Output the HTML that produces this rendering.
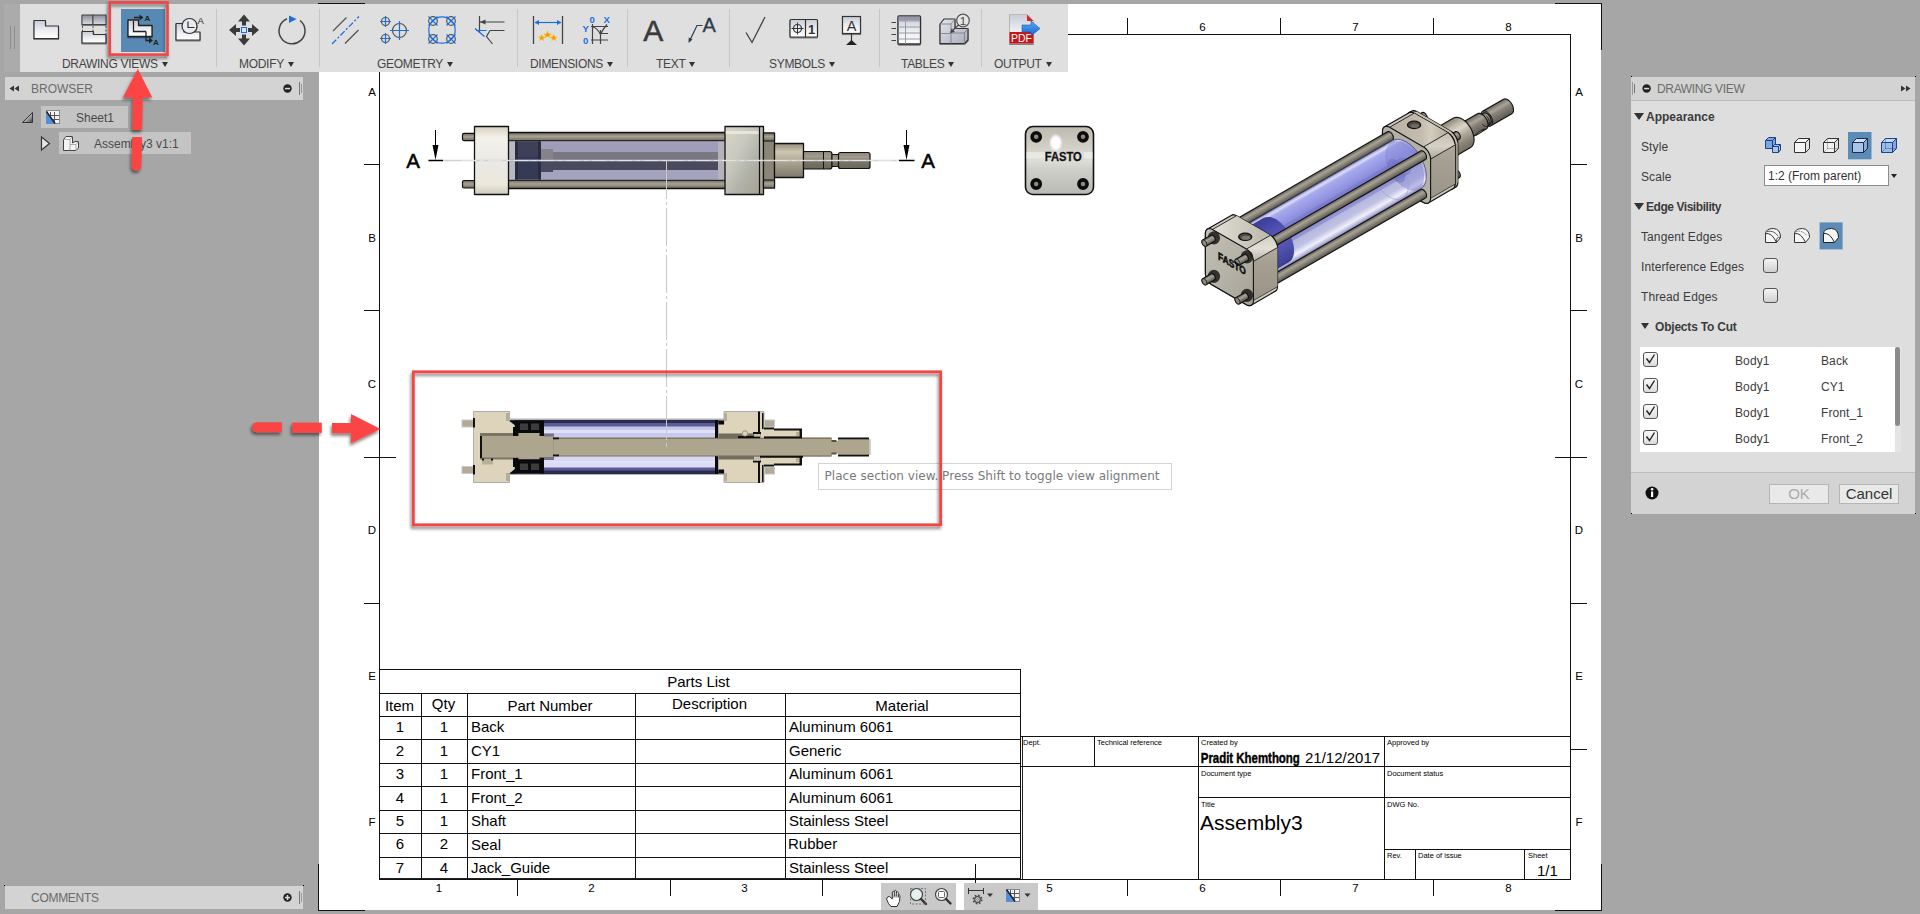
<!DOCTYPE html>
<html lang="en">
<head>
<meta charset="utf-8">
<title>Drawing - Assembly3</title>
<style>
html,body{margin:0;padding:0;}
body{width:1920px;height:914px;overflow:hidden;background:#a6a6a6;font-family:"Liberation Sans",Arial,sans-serif;font-size:12px;color:#444;}
#root{position:relative;width:1920px;height:914px;overflow:hidden;background:#a6a6a6;}
.abs{position:absolute;}
svg{position:absolute;left:0;top:0;overflow:visible;}
svg text{font-family:"Liberation Sans",Arial,sans-serif;}
/* toolbar */
#tb{left:20px;top:4px;width:1048px;height:68px;background:#dfdfdf;}
#tbgrip{left:4px;top:4px;width:16px;height:68px;background:#ababab;}
.tlabel{position:absolute;top:52.5px;letter-spacing:-0.3px;height:14px;line-height:14px;font-size:12px;color:#454545;white-space:nowrap;}
.tlabel i{display:inline-block;width:0;height:0;border-left:3.6px solid transparent;border-right:3.6px solid transparent;border-top:5px solid #333;margin-left:4px;vertical-align:1px;}
.sep{position:absolute;top:5px;width:1px;height:58px;background:#c6c6c6;}
/* panels */
.phead{position:absolute;background:#d3d3d3;height:23px;line-height:24px;font-size:12px;color:#6b6b6b;}
.trow{position:absolute;background:#c4c4c4;height:22px;line-height:24px;font-size:12px;color:#4a4a4a;}
#dv{left:1631px;top:77px;width:284px;height:437px;background:#dedede;}
#dv .lbl{position:absolute;left:10px;letter-spacing:0.1px;font-size:12px;color:#3c3c3c;height:16px;line-height:16px;white-space:nowrap;}
#dv .sec{position:absolute;letter-spacing:0;font-size:12px;font-weight:bold;color:#3c3c3c;height:16px;line-height:16px;white-space:nowrap;}
#dv .tri{position:absolute;width:0;height:0;border-left:5px solid transparent;border-right:5px solid transparent;border-top:7px solid #333;}
.cb{position:absolute;width:13px;height:13px;border:1px solid #555;border-radius:3px;background:linear-gradient(#f4f4f4,#d0d0d0);}
.btn{position:absolute;height:18px;line-height:18px;border:1px solid #b5b5b5;background:#e9e9e9;text-align:center;font-size:15px;color:#333;}
.dot{position:absolute;width:1px;height:1px;background:#000;}
</style>
</head>
<body>
<div id="root">

<!-- SHEET -->
<svg id="sheet" width="1920" height="914" viewBox="0 0 1920 914">
<rect x="319" y="4" width="1282" height="906" fill="#fff"/>
<g id="frame" stroke="#111" stroke-width="1" fill="none" shape-rendering="crispEdges">
<path d="M318 3.5H365 M1555 3.5H1602 M1601.5 3V50 M318.5 864V911 M318 910.5H365 M1555 910.5H1602 M1601.5 864V911"/>
<rect x="379.5" y="34.5" width="1191" height="845"/>
<path d="M1127.5 18V35 M1280.5 18V35 M1433.5 18V35"/>
<path d="M517.5 880V896 M670.5 880V896 M822.5 880V896 M975.5 864V896 M1127.5 880V896 M1280.5 880V896 M1433.5 880V896"/>
<path d="M364 164.5H380 M364 310.5H380 M364 457.5H396 M364 603.5H380"/>
<path d="M1571 164.5H1587 M1571 310.5H1587 M1555 457.5H1587 M1571 603.5H1587 M1571 749.5H1587"/>
</g>
<g id="zones" font-size="11.5" fill="#000" text-anchor="middle">
<text x="1202.5" y="31">6</text><text x="1355.5" y="31">7</text><text x="1508.5" y="31">8</text>
<text x="439" y="892">1</text><text x="591.5" y="892">2</text><text x="744.5" y="892">3</text><text x="1049.5" y="892">5</text><text x="1202.5" y="892">6</text><text x="1355.5" y="892">7</text><text x="1508.5" y="892">8</text>
<text x="372" y="96">A</text><text x="372" y="242">B</text><text x="372" y="388">C</text><text x="372" y="534">D</text><text x="372" y="680">E</text><text x="372" y="826">F</text>
<text x="1579" y="96">A</text><text x="1579" y="242">B</text><text x="1579" y="388">C</text><text x="1579" y="534">D</text><text x="1579" y="680">E</text><text x="1579" y="826">F</text>
</g>
<!-- PARTS LIST -->
<g id="parts" stroke="#111" stroke-width="1" fill="none" shape-rendering="crispEdges">
<path d="M380 669.5H1021 M380 693.5H1021 M380 716.5H1021 M380 739.5H1021 M380 763.5H1021 M380 786.5H1021 M380 810.5H1021 M380 833.5H1021 M380 857.5H1021 M421.5 694V880 M467.5 694V880 M635.5 694V880 M785.5 694V880 M1020.5 669V880"/>
<path d="M1022.5 736V880 M380 878.5H1021" stroke="#222"/>
</g>
<g id="partstxt" font-size="15" fill="#000">
<text x="698.5" y="687" text-anchor="middle">Parts List</text>
<text x="399.5" y="711" text-anchor="middle">Item</text><text x="443.5" y="709" text-anchor="middle">Qty</text><text x="550" y="711" text-anchor="middle">Part Number</text><text x="709.5" y="709" text-anchor="middle">Description</text><text x="902" y="711" text-anchor="middle">Material</text>
<text x="400" y="732" text-anchor="middle">1</text><text x="444" y="732" text-anchor="middle">1</text><text x="471" y="732">Back</text><text x="789" y="732">Aluminum 6061</text>
<text x="400" y="756" text-anchor="middle">2</text><text x="444" y="756" text-anchor="middle">1</text><text x="471" y="756">CY1</text><text x="789" y="756">Generic</text>
<text x="400" y="779" text-anchor="middle">3</text><text x="444" y="779" text-anchor="middle">1</text><text x="471" y="779">Front_1</text><text x="789" y="779">Aluminum 6061</text>
<text x="400" y="803" text-anchor="middle">4</text><text x="444" y="803" text-anchor="middle">1</text><text x="471" y="803">Front_2</text><text x="789" y="803">Aluminum 6061</text>
<text x="400" y="826" text-anchor="middle">5</text><text x="444" y="826" text-anchor="middle">1</text><text x="471" y="826">Shaft</text><text x="789" y="826">Stainless Steel</text>
<text x="400" y="849" text-anchor="middle">6</text><text x="444" y="849" text-anchor="middle">2</text><text x="471" y="850">Seal</text><text x="788" y="849">Rubber</text>
<text x="400" y="873" text-anchor="middle">7</text><text x="444" y="873" text-anchor="middle">4</text><text x="471" y="873">Jack_Guide</text><text x="789" y="873">Stainless Steel</text>
</g>
<!-- TITLE BLOCK -->
<g id="tblock" stroke="#111" stroke-width="1" fill="none" shape-rendering="crispEdges">
<path d="M1021 736.5H1571 M1021 766.5H1571 M1198 797.5H1571 M1384 849.5H1571 M1094.5 736V766 M1198.5 736V880 M1384.5 736V880 M1415.5 849V880 M1524.5 849V880"/>
</g>
<g id="tbtxt" font-size="7.5" fill="#000">
<text x="1023" y="745">Dept.</text><text x="1097" y="745">Technical reference</text><text x="1201" y="745">Created by</text><text x="1387" y="745">Approved by</text>
<text x="1201" y="776">Document type</text><text x="1387" y="776">Document status</text>
<text x="1201" y="807">Title</text><text x="1387" y="807">DWG No.</text>
<text x="1387" y="858">Rev.</text><text x="1418" y="858">Date of issue</text><text x="1528" y="858">Sheet</text>
<text x="1200.800" y="763.300" font-size="15.500" font-weight="bold" stroke="#000" stroke-width="0.450" textLength="99" lengthAdjust="spacingAndGlyphs">Pradit Khemthong</text>
<text x="1305" y="763" font-size="15">21/12/2017</text>
<text x="1200" y="830" font-size="21">Assembly3</text>
<text x="1537" y="876" font-size="15">1/1</text>
</g>
</svg>
<!-- DRAWINGS -->
<svg id="views" width="1920" height="914" viewBox="0 0 1920 914">
<defs>
<filter id="rsh" x="-10%" y="-10%" width="125%" height="130%"><feDropShadow dx="-1.2" dy="2.600" stdDeviation="1.800" flood-color="#000" flood-opacity="0.5"/></filter>
<linearGradient id="gRod" x1="0" y1="0" x2="0" y2="1"><stop offset="0" stop-color="#6a665b"/><stop offset="0.45" stop-color="#a9a394"/><stop offset="1" stop-color="#6f6a5e"/></linearGradient>
<linearGradient id="gShaft" x1="0" y1="0" x2="0" y2="1"><stop offset="0" stop-color="#8b8678"/><stop offset="0.3" stop-color="#a39d8e"/><stop offset="0.55" stop-color="#7a7569"/><stop offset="1" stop-color="#6b675b"/></linearGradient>
<linearGradient id="gCapL" x1="0" y1="0" x2="0" y2="1"><stop offset="0" stop-color="#d6d0bd"/><stop offset="0.16" stop-color="#f3f1ea"/><stop offset="0.6" stop-color="#e9e8e3"/><stop offset="0.85" stop-color="#ebe9dc"/><stop offset="1" stop-color="#cfcbb9"/></linearGradient>
<linearGradient id="gCapR" x1="0" y1="0" x2="1" y2="1"><stop offset="0" stop-color="#d9d5c4"/><stop offset="0.35" stop-color="#c9c9c0"/><stop offset="0.6" stop-color="#b3b4ab"/><stop offset="1" stop-color="#a29f90"/></linearGradient>
<linearGradient id="gBush" x1="0" y1="0" x2="0" y2="1"><stop offset="0" stop-color="#948e7e"/><stop offset="0.25" stop-color="#cdc6b2"/><stop offset="0.6" stop-color="#a69f8d"/><stop offset="1" stop-color="#7d786b"/></linearGradient>
<linearGradient id="gPlate" x1="0" y1="0" x2="0" y2="1"><stop offset="0" stop-color="#bdbab0"/><stop offset="0.3" stop-color="#d1cfc6"/><stop offset="0.5" stop-color="#deded8"/><stop offset="0.62" stop-color="#cfd0ca"/><stop offset="1" stop-color="#b9b9b2"/></linearGradient>
<linearGradient id="gLav" x1="0" y1="0" x2="0" y2="1"><stop offset="0" stop-color="#c4c4ea"/><stop offset="1" stop-color="#dcdcf6"/></linearGradient>
</defs>

<!-- ===== TOP (SIDE) VIEW ===== -->
<g id="sideview" stroke-linejoin="round">
<!-- tie rods -->
<rect x="508" y="132.500" width="218" height="8.500" fill="url(#gRod)" stroke="#111" stroke-width="1.300"/>
<rect x="508" y="180" width="218" height="8.500" fill="url(#gRod)" stroke="#111" stroke-width="1.300"/>
<!-- tube -->
<rect x="508.500" y="141.500" width="216.500" height="38" fill="#9a9ab6"/>
<rect x="508.500" y="141.500" width="7" height="38" fill="#b9b9c1"/>
<rect x="717.500" y="141.500" width="8" height="38" fill="#b4b3ba"/>
<rect x="541" y="141.500" width="177" height="10.500" fill="#9e9eba"/>
<rect x="541" y="169.500" width="177" height="10" fill="#a3a3be"/>
<rect x="541" y="149" width="12" height="23" fill="#85828c"/>
<rect x="553" y="152" width="165" height="9" fill="#7a7781"/>
<rect x="541" y="160.500" width="177" height="9.500" fill="#4a495e"/>
<rect x="541" y="160.500" width="12" height="11.500" fill="#4a495e"/>
<rect x="515" y="141.500" width="26" height="38" fill="#373a55"/>
<rect x="515" y="141.500" width="26" height="15" fill="#3e405a"/>
<rect x="515" y="141.500" width="3" height="38" fill="#2a2c40"/>
<rect x="538" y="141.500" width="3" height="38" fill="#2a2c40"/>
<rect x="508.500" y="159.500" width="209" height="2" fill="#6f74a8" opacity="0.55"/>
<!-- left nuts -->
<rect x="462.500" y="133.400" width="13" height="7.200" rx="1.500" fill="url(#gRod)" stroke="#111" stroke-width="1.200"/>
<rect x="462.500" y="180.500" width="13" height="7.500" rx="1.500" fill="url(#gRod)" stroke="#111" stroke-width="1.200"/>
<!-- left cap -->
<rect x="474.500" y="126.500" width="34" height="68" fill="url(#gCapL)" stroke="#111" stroke-width="1.300"/>
<!-- right cap -->
<rect x="725" y="126.500" width="38.500" height="68" fill="url(#gCapR)" stroke="#111" stroke-width="1.300"/>
<rect x="725.700" y="131" width="33" height="3" fill="#efece0" opacity="0.8"/>
<path d="M759.500 126.500V194.500" stroke="#111" stroke-width="1.200"/>
<!-- right nuts + hub -->
<rect x="763.500" y="133" width="11" height="55" fill="#8a8576" stroke="#111" stroke-width="1.200"/>
<rect x="763.500" y="133" width="11" height="8" fill="url(#gRod)" stroke="#111" stroke-width="1.200"/>
<rect x="763.500" y="180" width="11" height="8" fill="url(#gRod)" stroke="#111" stroke-width="1.200"/>
<!-- bushing -->
<rect x="774.500" y="143.500" width="29" height="34" fill="url(#gBush)" stroke="#111" stroke-width="1.300"/>
<!-- rod -->
<path d="M803.500 151.500H829.500Q832 151.500 832 154V166.500Q832 169 829.500 169H803.500Z" fill="url(#gShaft)" stroke="#111" stroke-width="1.200"/>
<path d="M823.500 151.500V169" stroke="#111" stroke-width="1"/>
<rect x="832" y="154.500" width="6.500" height="12" fill="url(#gShaft)" stroke="#111" stroke-width="1"/>
<rect x="838.500" y="152.500" width="31.500" height="16" rx="2" fill="url(#gShaft)" stroke="#111" stroke-width="1.200"/>
<!-- section line -->
<path d="M443 160.500H899" stroke="#d2d2d2" stroke-width="1.500"/>
<path d="M462 160.500H912" stroke="#f2f2f2" stroke-width="1.200" stroke-dasharray="14 4 4 4" opacity="0.55"/>
<path d="M428.500 160.500H443 M899 160.500H914.500" stroke="#000" stroke-width="1.600"/>
<path d="M435.500 130V150 M906.500 130V150" stroke="#000" stroke-width="1"/>
<path d="M432.500 145H438.500L435.500 160Z M903.500 145H909.500L906.500 160Z" fill="#000"/>
<text x="406.300" y="168" font-size="20.500" fill="#000" stroke="#000" stroke-width="0.500">A</text>
<text x="921.300" y="168" font-size="20.500" fill="#000" stroke="#000" stroke-width="0.500">A</text>
</g>

<!-- ===== END VIEW ===== -->
<g id="endview">
<rect x="1025.500" y="126.500" width="68" height="68" rx="7.500" fill="url(#gPlate)" stroke="#111" stroke-width="1.600"/>
<rect x="1026.500" y="152" width="66" height="6.500" fill="#eeeeea" opacity="0.75"/>
<rect x="1046" y="150.500" width="38" height="10" fill="#d9d9d3" opacity="0.8"/>
<ellipse cx="1055.800" cy="142.700" rx="4.800" ry="6.500" fill="#fff"/>
<ellipse cx="1055.800" cy="142.700" rx="6.500" ry="8.500" fill="#fff" opacity="0.45"/>
<g fill="#8a8880" stroke="#0c0c0c" stroke-width="3.600"><circle cx="1036.200" cy="136.800" r="4.100"/><circle cx="1083" cy="136.800" r="4.100"/><circle cx="1036.200" cy="184" r="4.100"/><circle cx="1083" cy="184" r="4.100"/></g>
<text x="1063.300" y="160.500" font-size="13.500" font-weight="bold" fill="#111" stroke="#111" stroke-width="0.300" text-anchor="middle" textLength="37" lengthAdjust="spacingAndGlyphs">FASTO</text>
</g>

<!-- ===== SECTION VIEW ===== -->
<g id="secview">
<!-- outer gray lines of tube -->
<rect x="509" y="418.500" width="215" height="56.500" fill="#b3b3b3"/>
<!-- tube interior -->
<rect x="509" y="420" width="209" height="54" fill="#2b2b4b"/>
<rect x="544" y="423" width="172" height="47.500" fill="#5b5b97"/>
<rect x="544" y="426.500" width="172" height="41" fill="url(#gLav)"/>
<rect x="544" y="430" width="172" height="3" fill="#e0e0f8"/>
<rect x="544" y="461" width="172" height="2.500" fill="#e0e0f8"/>
<!-- left nuts -->
<rect x="462" y="420" width="12" height="7" fill="#b3a994" stroke="#c9c9c9" stroke-width="1"/>
<rect x="462" y="466.500" width="12" height="7" fill="#b3a994" stroke="#c9c9c9" stroke-width="1"/>
<!-- left cap -->
<path d="M473.500 411.500H509.500V421L514.500 424.500V470L509.500 473.500V482.500H473.500Z" fill="#ddd4bb" stroke="#adadad" stroke-width="1"/>
<path d="M506 413H509V421H506Z M506 473H509V481H506Z" fill="#b5ad96"/>
<rect x="473" y="418" width="2" height="9.500" fill="#111"/><rect x="473" y="465" width="2" height="9.500" fill="#111"/>
<rect x="480" y="433" width="38" height="26.500" fill="#7b7563"/>
<!-- seals -->
<g fill="#0a0a0a"><rect x="515" y="420.500" width="29" height="12.500"/><rect x="513" y="427" width="5.500" height="9"/><rect x="539.500" y="421" width="4.500" height="15"/><path d="M509.500 421L516 421V426Z"/>
<rect x="515" y="460" width="29" height="13"/><rect x="513" y="458" width="5.500" height="9"/><rect x="539.500" y="458" width="4.500" height="15.500"/><path d="M509.500 473.500L516 473.500V468Z"/></g>
<g fill="#3c3c3c"><rect x="520" y="423.500" width="8" height="6.500"/><rect x="531" y="423.500" width="8" height="6.500"/><rect x="520" y="463.500" width="8" height="6.500"/><rect x="531" y="463.500" width="8" height="6.500"/></g>
<!-- rod -->
<rect x="480.500" y="436" width="73.500" height="21.500" fill="#aea58f"/>
<rect x="518.500" y="433" width="21" height="26" fill="#aea58f"/>
<rect x="544" y="433.500" width="10" height="3" fill="#76738a"/><rect x="544" y="457" width="10" height="3" fill="#76738a"/>
<rect x="553.500" y="437.500" width="278" height="19" fill="#7d7663"/>
<rect x="553.500" y="439" width="278" height="16.500" fill="#aea58f"/>
<rect x="553" y="437.500" width="6" height="1.800" fill="#111"/><rect x="553" y="454.500" width="6" height="1.800" fill="#111"/>
<rect x="480" y="436" width="2" height="22" fill="#111"/>
<rect x="482" y="459.500" width="11" height="5" fill="#b9af99"/><rect x="482" y="458.500" width="2" height="2" fill="#111"/><rect x="491" y="458.500" width="2" height="2" fill="#111"/>
<!-- tube right end -->
<rect x="715" y="420" width="3.500" height="18" fill="#0a0a0a"/><rect x="715" y="456" width="3.500" height="18" fill="#0a0a0a"/>
<!-- right cap -->
<path d="M718.500 424H724V411.500H764V482.500H724V470H718.500Z" fill="#ddd4bb" stroke="#adadad" stroke-width="1"/>
<path d="M724 413H727V421H724Z M724 473H727V481H724Z" fill="#b5ad96"/>
<rect x="718.500" y="420.500" width="5.500" height="4" fill="#0a0a0a"/><rect x="718.500" y="469.500" width="5.500" height="4" fill="#0a0a0a"/>
<rect x="718.500" y="433.500" width="42" height="5" fill="#716c5b"/><rect x="718.500" y="456" width="42" height="3.500" fill="#716c5b"/>
<rect x="738" y="436" width="22" height="2" fill="#111"/>
<circle cx="745" cy="433.500" r="2.700" fill="#ddd4bb" stroke="#9a927e" stroke-width="1"/>
<rect x="753" y="432" width="8" height="2" fill="#111"/><rect x="753" y="460.500" width="8" height="2" fill="#111"/>
<rect x="754" y="434" width="6" height="4" fill="#c4c1b8"/><rect x="754" y="456.500" width="6" height="4" fill="#c4c1b8"/>
<rect x="758" y="411.500" width="2" height="22" fill="#111"/><rect x="758" y="462" width="2" height="21" fill="#111"/>
<rect x="762" y="413" width="1.500" height="16" fill="#111"/><rect x="762" y="465" width="1.500" height="17" fill="#111"/>
<!-- right nuts -->
<rect x="764.500" y="420" width="10" height="7" fill="#b3a994" stroke="#c9c9c9" stroke-width="1"/>
<rect x="764.500" y="467" width="10" height="7" fill="#b3a994" stroke="#c9c9c9" stroke-width="1"/>
<!-- bushing -->
<rect x="762" y="430" width="40" height="7.500" fill="#ddd4bb"/><rect x="762" y="456.500" width="40" height="7.500" fill="#ddd4bb"/>
<rect x="764" y="427.500" width="10" height="2" fill="#111"/><rect x="774" y="428.500" width="28" height="2" fill="#111"/><rect x="764" y="436.500" width="38" height="1.800" fill="#111"/>
<rect x="764" y="464.500" width="10" height="2" fill="#111"/><rect x="774" y="463.500" width="28" height="2" fill="#111"/><rect x="760" y="455.800" width="43" height="1.800" fill="#111"/>
<rect x="799.500" y="430" width="2.500" height="7" fill="#111"/><rect x="799.500" y="457" width="2.500" height="7" fill="#111"/>
<rect x="796" y="432" width="3" height="4" fill="#b5ad96"/><rect x="796" y="458" width="3" height="4" fill="#b5ad96"/>
<rect x="716" y="437.800" width="115.500" height="18.600" fill="#7d7663"/><rect x="716" y="439" width="115.500" height="16.400" fill="#aea58f"/>
<rect x="764" y="436.800" width="38" height="1.600" fill="#111"/><rect x="760" y="455.800" width="43" height="1.600" fill="#111"/><rect x="738" y="436.600" width="22" height="1.600" fill="#111"/>
<!-- rod end -->
<rect x="831" y="441" width="7.500" height="12.500" fill="#aea58f"/><rect x="831.500" y="440" width="5" height="2" fill="#55503f"/><rect x="831.500" y="452.500" width="5" height="2" fill="#55503f"/>
<rect x="838" y="437.500" width="31" height="19" fill="#111"/><rect x="838" y="439.300" width="31" height="15.400" fill="#aea58f"/>
<rect x="869" y="439" width="1.800" height="16" fill="#c7c7c7"/>
</g>
<path d="M666.500 161V447" stroke="#c9c9c9" stroke-width="1" stroke-dasharray="38 3 3 3" shape-rendering="crispEdges"/>
<!-- ISOSTART --><defs><linearGradient id="iEnd" x1="0" y1="0" x2="1" y2="1"><stop offset="0" stop-color="#c2bfb6"/><stop offset="0.5" stop-color="#b5b2a8"/><stop offset="1" stop-color="#a5a196"/></linearGradient>
<linearGradient id="iTopB" x1="0" y1="0" x2="1" y2="0"><stop offset="0" stop-color="#e3e1d8"/><stop offset="0.4" stop-color="#d2cfc5"/><stop offset="1" stop-color="#bdb7aa"/></linearGradient>
<linearGradient id="iSideB" x1="0" y1="0" x2="0" y2="1"><stop offset="0" stop-color="#b3ad9f"/><stop offset="0.3" stop-color="#a59f92"/><stop offset="1" stop-color="#9a9488"/></linearGradient>
<linearGradient id="iFilB" x1="0" y1="0" x2="0" y2="1"><stop offset="0" stop-color="#d1cdc1"/><stop offset="0.5" stop-color="#e2dfd5"/><stop offset="1" stop-color="#b9b4a7"/></linearGradient>
<linearGradient id="iTopF" x1="0" y1="0" x2="1" y2="0"><stop offset="0" stop-color="#b9b2a4"/><stop offset="0.55" stop-color="#c4bdaf"/><stop offset="0.7" stop-color="#d3cdc0"/><stop offset="1" stop-color="#b3ac9d"/></linearGradient>
<linearGradient id="iSideF" x1="0" y1="0" x2="0" y2="1"><stop offset="0" stop-color="#b0aa9c"/><stop offset="0.3" stop-color="#a59f92"/><stop offset="1" stop-color="#9c968a"/></linearGradient>
<linearGradient id="iFilF" x1="0" y1="0" x2="0" y2="1"><stop offset="0" stop-color="#c4beb0"/><stop offset="0.5" stop-color="#d6d2c6"/><stop offset="1" stop-color="#aea899"/></linearGradient><linearGradient id="iR1" gradientUnits="userSpaceOnUse" x1="1493.9" y1="104.8" x2="1502.2" y2="119.2"><stop offset="0" stop-color="#6b675e"/><stop offset="0.3" stop-color="#aaa598"/><stop offset="0.5" stop-color="#87837a"/><stop offset="1" stop-color="#5f5b53"/></linearGradient>
<linearGradient id="iR2" gradientUnits="userSpaceOnUse" x1="1480.8" y1="114.7" x2="1487.1" y2="125.6"><stop offset="0" stop-color="#6b675e"/><stop offset="0.3" stop-color="#aaa598"/><stop offset="0.5" stop-color="#87837a"/><stop offset="1" stop-color="#5f5b53"/></linearGradient>
<linearGradient id="iR3" gradientUnits="userSpaceOnUse" x1="1465.4" y1="120.7" x2="1474.2" y2="135.9"><stop offset="0" stop-color="#6b675e"/><stop offset="0.3" stop-color="#aaa598"/><stop offset="0.5" stop-color="#87837a"/><stop offset="1" stop-color="#5f5b53"/></linearGradient>
<linearGradient id="iB1" gradientUnits="userSpaceOnUse" x1="1443.6" y1="123.8" x2="1460.6" y2="153.2"><stop offset="0" stop-color="#8a8578"/><stop offset="0.22" stop-color="#c3bdad"/><stop offset="0.36" stop-color="#dad5c6"/><stop offset="0.55" stop-color="#b1ab9b"/><stop offset="0.8" stop-color="#878275"/><stop offset="1" stop-color="#716d62"/></linearGradient>
<linearGradient id="iN0" gradientUnits="userSpaceOnUse" x1="1418.6" y1="114.6" x2="1422.8" y2="121.9"><stop offset="0" stop-color="#5e5b52"/><stop offset="0.35" stop-color="#a8a396"/><stop offset="0.6" stop-color="#8b877b"/><stop offset="1" stop-color="#55524a"/></linearGradient>
<linearGradient id="iN1" gradientUnits="userSpaceOnUse" x1="1451.7" y1="172.3" x2="1455.9" y2="179.5"><stop offset="0" stop-color="#5e5b52"/><stop offset="0.35" stop-color="#a8a396"/><stop offset="0.6" stop-color="#8b877b"/><stop offset="1" stop-color="#55524a"/></linearGradient>
<linearGradient id="iN2" gradientUnits="userSpaceOnUse" x1="1451.7" y1="133.7" x2="1455.9" y2="141.0"><stop offset="0" stop-color="#5e5b52"/><stop offset="0.35" stop-color="#a8a396"/><stop offset="0.6" stop-color="#8b877b"/><stop offset="1" stop-color="#55524a"/></linearGradient>
<linearGradient id="iB2" gradientUnits="userSpaceOnUse" x1="1428.2" y1="129.8" x2="1447.7" y2="163.6"><stop offset="0" stop-color="#8a8578"/><stop offset="0.22" stop-color="#c3bdad"/><stop offset="0.36" stop-color="#dad5c6"/><stop offset="0.55" stop-color="#b1ab9b"/><stop offset="0.8" stop-color="#878275"/><stop offset="1" stop-color="#716d62"/></linearGradient>
<linearGradient id="iT0" gradientUnits="userSpaceOnUse" x1="1309.4" y1="176.9" x2="1314.3" y2="185.4"><stop offset="0" stop-color="#5e5b52"/><stop offset="0.35" stop-color="#a8a396"/><stop offset="0.6" stop-color="#8b877b"/><stop offset="1" stop-color="#55524a"/></linearGradient>
<linearGradient id="iTube" gradientUnits="userSpaceOnUse" x1="1314.4" y1="185.7" x2="1342.4" y2="234.2"><stop offset="0" stop-color="#9698de"/><stop offset="0.05" stop-color="#dcdcf8"/><stop offset="0.1" stop-color="#a8aaec"/><stop offset="0.25" stop-color="#9698e4"/><stop offset="0.42" stop-color="#8082d2"/><stop offset="0.5" stop-color="#7e80cc"/><stop offset="0.56" stop-color="#8486c2"/><stop offset="0.63" stop-color="#b2b4dc"/><stop offset="0.8" stop-color="#c0c2e4"/><stop offset="0.9" stop-color="#f0f0fa"/><stop offset="0.95" stop-color="#c2c4e2"/><stop offset="1" stop-color="#8c8ec2"/></linearGradient>
<linearGradient id="iPist" gradientUnits="userSpaceOnUse" x1="1254.1" y1="223.4" x2="1279.6" y2="267.5"><stop offset="0" stop-color="#33348e"/><stop offset="0.3" stop-color="#4a4bb0"/><stop offset="0.5" stop-color="#5a5bbe"/><stop offset="0.75" stop-color="#4647a8"/><stop offset="1" stop-color="#303188"/></linearGradient>
<linearGradient id="iT1" gradientUnits="userSpaceOnUse" x1="1342.5" y1="234.5" x2="1347.4" y2="243.0"><stop offset="0" stop-color="#5e5b52"/><stop offset="0.35" stop-color="#a8a396"/><stop offset="0.6" stop-color="#8b877b"/><stop offset="1" stop-color="#55524a"/></linearGradient>
<linearGradient id="iT2" gradientUnits="userSpaceOnUse" x1="1342.5" y1="196.0" x2="1347.4" y2="204.5"><stop offset="0" stop-color="#5e5b52"/><stop offset="0.35" stop-color="#a8a396"/><stop offset="0.6" stop-color="#8b877b"/><stop offset="1" stop-color="#55524a"/></linearGradient>
<linearGradient id="iBN0" gradientUnits="userSpaceOnUse" x1="1206.9" y1="237.7" x2="1210.4" y2="243.8"><stop offset="0" stop-color="#5e5b52"/><stop offset="0.35" stop-color="#a8a396"/><stop offset="0.6" stop-color="#8b877b"/><stop offset="1" stop-color="#55524a"/></linearGradient>
<linearGradient id="iBN1" gradientUnits="userSpaceOnUse" x1="1206.9" y1="276.2" x2="1210.4" y2="282.3"><stop offset="0" stop-color="#5e5b52"/><stop offset="0.35" stop-color="#a8a396"/><stop offset="0.6" stop-color="#8b877b"/><stop offset="1" stop-color="#55524a"/></linearGradient>
<linearGradient id="iBN2" gradientUnits="userSpaceOnUse" x1="1240.0" y1="256.8" x2="1243.5" y2="262.9"><stop offset="0" stop-color="#5e5b52"/><stop offset="0.35" stop-color="#a8a396"/><stop offset="0.6" stop-color="#8b877b"/><stop offset="1" stop-color="#55524a"/></linearGradient>
<linearGradient id="iBN3" gradientUnits="userSpaceOnUse" x1="1240.0" y1="295.3" x2="1243.5" y2="301.4"><stop offset="0" stop-color="#5e5b52"/><stop offset="0.35" stop-color="#a8a396"/><stop offset="0.6" stop-color="#8b877b"/><stop offset="1" stop-color="#55524a"/></linearGradient></defs>
<g id="isoview">
<path d="M1482.6 111.3 L1503.5 99.3 L1504.2 99.0 L1505.0 98.9 L1505.8 99.0 L1506.7 99.2 L1507.6 99.7 L1508.6 100.3 L1509.5 101.1 L1510.3 102.0 L1511.1 103.0 L1511.8 104.1 L1512.4 105.2 L1512.9 106.4 L1513.2 107.6 L1513.4 108.8 L1513.5 109.9 L1513.4 110.9 L1513.2 111.8 L1512.9 112.6 L1512.4 113.2 L1511.8 113.7 L1490.9 125.7 L1490.2 126.0 L1489.4 126.1 L1488.6 126.0 L1487.7 125.7 L1486.8 125.3 L1485.9 124.7 L1485.0 123.9 L1484.1 123.0 L1483.3 122.0 L1482.6 120.9 L1482.0 119.8 L1481.6 118.6 L1481.2 117.4 L1481.0 116.2 L1480.9 115.1 L1481.0 114.1 L1481.2 113.2 L1481.6 112.4 L1482.0 111.8Z" fill="url(#iR1)" stroke="#111" stroke-width="1.1" stroke-linejoin="round" />
<path d="M1492.7 121.9 L1492.6 120.8 L1492.4 119.6 L1492.0 118.5 L1491.5 117.3 L1490.9 116.1 L1490.2 115.0 L1489.4 114.0 L1488.6 113.1 L1487.7 112.4 L1486.8 111.7 L1485.9 111.3 L1485.0 111.0 L1484.1 110.9 L1483.3 111.0 L1482.6 111.3 L1482.0 111.8 L1481.6 112.4 L1481.2 113.2 L1481.0 114.1 L1480.9 115.1 L1481.0 116.2 L1481.2 117.4 L1481.6 118.6 L1482.0 119.8 L1482.6 120.9 L1483.3 122.0 L1484.1 123.0 L1485.0 123.9 L1485.9 124.7 L1486.8 125.3 L1487.7 125.7 L1488.6 126.0 L1489.4 126.1 L1490.2 126.0 L1490.9 125.7 L1491.5 125.2 L1492.0 124.6 L1492.4 123.8 L1492.6 122.9Z" fill="url(#iR1)" stroke="#111" stroke-width="0.9900000000000001" stroke-linejoin="round" />
<path d="M1489.9 124.0 L1485.0 126.8 L1484.5 127.0 L1483.9 127.1 L1483.2 127.1 L1482.5 126.9 L1481.8 126.5 L1481.1 126.1 L1480.5 125.5 L1479.8 124.8 L1479.2 124.0 L1478.7 123.2 L1478.2 122.3 L1477.9 121.4 L1477.6 120.5 L1477.4 119.6 L1477.4 118.8 L1477.4 118.0 L1477.6 117.3 L1477.9 116.7 L1478.2 116.3 L1478.7 115.9 L1483.6 113.1 L1484.2 112.8 L1484.8 112.8 L1485.4 112.8 L1486.1 113.0 L1486.8 113.4 L1487.5 113.8 L1488.2 114.4 L1488.8 115.1 L1489.4 115.9 L1489.9 116.7 L1490.4 117.6 L1490.8 118.5 L1491.0 119.4 L1491.2 120.3 L1491.2 121.1 L1491.2 121.9 L1491.0 122.6 L1490.8 123.1 L1490.4 123.6Z" fill="url(#iR2)" stroke="#111" stroke-width="1.1" stroke-linejoin="round" />
<path d="M1486.3 123.9 L1486.2 123.1 L1486.1 122.2 L1485.8 121.3 L1485.4 120.4 L1485.0 119.6 L1484.5 118.7 L1483.9 118.0 L1483.2 117.3 L1482.5 116.7 L1481.8 116.2 L1481.1 115.9 L1480.5 115.7 L1479.8 115.6 L1479.2 115.7 L1478.7 115.9 L1478.2 116.3 L1477.9 116.7 L1477.6 117.3 L1477.4 118.0 L1477.4 118.8 L1477.4 119.6 L1477.6 120.5 L1477.9 121.4 L1478.2 122.3 L1478.7 123.2 L1479.2 124.0 L1479.8 124.8 L1480.5 125.5 L1481.1 126.1 L1481.8 126.5 L1482.5 126.9 L1483.2 127.1 L1483.9 127.1 L1484.5 127.0 L1485.0 126.8 L1485.4 126.5 L1485.8 126.0 L1486.1 125.4 L1486.2 124.7Z" fill="url(#iR2)" stroke="#111" stroke-width="0.9900000000000001" stroke-linejoin="round" />
<path d="M1457.6 125.2 L1477.4 113.8 L1478.2 113.4 L1479.0 113.3 L1479.9 113.4 L1480.9 113.7 L1481.8 114.2 L1482.8 114.8 L1483.8 115.6 L1484.7 116.6 L1485.5 117.7 L1486.2 118.8 L1486.9 120.1 L1487.4 121.3 L1487.8 122.6 L1488.0 123.8 L1488.1 125.0 L1488.0 126.0 L1487.8 127.0 L1487.4 127.8 L1486.9 128.5 L1486.2 129.0 L1466.4 140.4 L1465.7 140.7 L1464.9 140.8 L1464.0 140.7 L1463.0 140.5 L1462.0 140.0 L1461.1 139.3 L1460.1 138.5 L1459.2 137.6 L1458.4 136.5 L1457.6 135.3 L1457.0 134.1 L1456.5 132.9 L1456.1 131.6 L1455.9 130.4 L1455.8 129.2 L1455.9 128.1 L1456.1 127.2 L1456.5 126.3 L1457.0 125.7Z" fill="url(#iR3)" stroke="#111" stroke-width="1.1" stroke-linejoin="round" />
<path d="M1468.3 136.4 L1468.2 135.2 L1468.0 134.0 L1467.6 132.7 L1467.1 131.5 L1466.4 130.3 L1465.7 129.1 L1464.9 128.0 L1464.0 127.1 L1463.0 126.3 L1462.0 125.6 L1461.1 125.1 L1460.1 124.9 L1459.2 124.8 L1458.4 124.9 L1457.6 125.2 L1457.0 125.7 L1456.5 126.3 L1456.1 127.2 L1455.9 128.1 L1455.8 129.2 L1455.9 130.4 L1456.1 131.6 L1456.5 132.9 L1457.0 134.1 L1457.6 135.3 L1458.4 136.5 L1459.2 137.6 L1460.1 138.5 L1461.1 139.3 L1462.0 140.0 L1463.0 140.5 L1464.0 140.7 L1464.9 140.8 L1465.7 140.7 L1466.4 140.4 L1467.1 139.9 L1467.6 139.3 L1468.0 138.4 L1468.2 137.5Z" fill="url(#iR3)" stroke="#111" stroke-width="0.9900000000000001" stroke-linejoin="round" />
<path d="M1482.2 124.1 L1483.0 124.9 L1483.8 125.5 L1484.7 126.0 L1485.5 126.4 L1486.4 126.5 L1487.1 126.5 L1487.8 126.2 L1488.4 125.8 L1488.8 125.3 L1489.1 124.6 L1489.3 123.7 L1489.4 122.8 L1489.3 121.7 L1489.1 120.6 L1488.7 119.5 L1488.2 118.4 L1487.6 117.4 L1486.9 116.4 L1486.2 115.5" fill="none" stroke="#111" stroke-width="0.8" stroke-linejoin="round" />
<path d="M1478.2 132.3 L1483.8 129.0 L1481.8 132.0 L1476.2 135.3Z" fill="#8a8578" stroke="#111" stroke-width="0.8" stroke-linejoin="round" />
<path d="M1433.0 129.9 L1453.5 118.1 L1455.0 117.5 L1456.6 117.3 L1458.3 117.5 L1460.2 118.0 L1462.0 118.9 L1463.9 120.2 L1465.8 121.7 L1467.5 123.6 L1469.1 125.7 L1470.5 127.9 L1471.8 130.3 L1472.7 132.7 L1473.5 135.1 L1473.9 137.5 L1474.1 139.7 L1473.9 141.8 L1473.5 143.7 L1472.7 145.3 L1471.8 146.6 L1470.5 147.5 L1450.0 159.4 L1448.6 159.9 L1447.0 160.2 L1445.2 160.0 L1443.4 159.4 L1441.5 158.5 L1439.6 157.3 L1437.8 155.7 L1436.1 153.9 L1434.5 151.8 L1433.0 149.5 L1431.8 147.2 L1430.8 144.8 L1430.1 142.3 L1429.7 140.0 L1429.5 137.7 L1429.7 135.6 L1430.1 133.8 L1430.8 132.2 L1431.8 130.9Z" fill="url(#iB1)" stroke="#111" stroke-width="1.1" stroke-linejoin="round" />
<path d="M1415.1 116.7 L1422.2 112.6 L1422.5 112.4 L1422.9 112.4 L1423.4 112.4 L1423.8 112.6 L1424.3 112.8 L1424.7 113.1 L1425.2 113.5 L1425.6 113.9 L1426.0 114.5 L1426.4 115.0 L1426.7 115.6 L1426.9 116.2 L1427.1 116.8 L1427.2 117.4 L1427.2 117.9 L1427.2 118.5 L1427.1 118.9 L1426.9 119.3 L1426.7 119.6 L1426.4 119.9 L1419.3 123.9 L1419.0 124.1 L1418.6 124.1 L1418.1 124.1 L1417.7 124.0 L1417.2 123.7 L1416.7 123.4 L1416.3 123.0 L1415.9 122.6 L1415.5 122.1 L1415.1 121.5 L1414.8 120.9 L1414.6 120.3 L1414.4 119.7 L1414.3 119.2 L1414.2 118.6 L1414.3 118.1 L1414.4 117.6 L1414.6 117.2 L1414.8 116.9Z" fill="url(#iN0)" stroke="#111" stroke-width="1.1" stroke-linejoin="round" />
<path d="M1459.5 177.5 L1452.4 181.6 L1452.0 181.7 L1451.6 181.8 L1451.2 181.7 L1450.8 181.6 L1450.3 181.4 L1449.8 181.1 L1449.4 180.7 L1448.9 180.2 L1448.6 179.7 L1448.2 179.2 L1447.9 178.6 L1447.7 178.0 L1447.5 177.4 L1447.4 176.8 L1447.3 176.2 L1447.4 175.7 L1447.5 175.3 L1447.7 174.9 L1447.9 174.5 L1448.2 174.3 L1455.3 170.2 L1455.6 170.1 L1456.0 170.0 L1456.5 170.1 L1456.9 170.2 L1457.4 170.4 L1457.8 170.8 L1458.3 171.1 L1458.7 171.6 L1459.1 172.1 L1459.5 172.7 L1459.8 173.2 L1460.0 173.8 L1460.2 174.4 L1460.3 175.0 L1460.3 175.6 L1460.3 176.1 L1460.2 176.6 L1460.0 177.0 L1459.8 177.3Z" fill="url(#iN1)" stroke="#111" stroke-width="1.1" stroke-linejoin="round" />
<path d="M1448.2 135.8 L1455.3 131.7 L1455.6 131.5 L1456.0 131.5 L1456.5 131.5 L1456.9 131.7 L1457.4 131.9 L1457.8 132.2 L1458.3 132.6 L1458.7 133.1 L1459.1 133.6 L1459.5 134.1 L1459.8 134.7 L1460.0 135.3 L1460.2 135.9 L1460.3 136.5 L1460.3 137.0 L1460.3 137.6 L1460.2 138.0 L1460.0 138.4 L1459.8 138.7 L1459.5 139.0 L1452.4 143.0 L1452.0 143.2 L1451.6 143.2 L1451.2 143.2 L1450.8 143.1 L1450.3 142.8 L1449.8 142.5 L1449.4 142.1 L1448.9 141.7 L1448.6 141.2 L1448.2 140.6 L1447.9 140.0 L1447.7 139.4 L1447.5 138.8 L1447.4 138.3 L1447.3 137.7 L1447.4 137.2 L1447.5 136.7 L1447.7 136.3 L1447.9 136.0Z" fill="url(#iN2)" stroke="#111" stroke-width="1.1" stroke-linejoin="round" />
<path d="M1420.0 141.2 L1420.1 138.8 L1420.6 136.6 L1421.5 134.8 L1422.6 133.3 L1424.0 132.2 L1431.8 127.8 L1433.4 127.1 L1435.3 126.8 L1437.3 127.0 L1439.4 127.7 L1441.5 128.7 L1443.7 130.2 L1445.8 132.0 L1447.8 134.1 L1449.6 136.4 L1451.3 139.0 L1452.7 141.7 L1453.8 144.5 L1454.6 147.3 L1455.1 150.0 L1455.3 152.6 L1455.1 155.0 L1454.6 157.1 L1453.8 159.0 L1452.7 160.4 L1451.3 161.5 L1443.5 166.0 L1441.9 166.7 L1440.0 166.9 L1438.0 166.7 L1435.9 166.1 L1433.8 165.1 L1431.6 163.6 L1429.5 161.8 L1427.5 159.7 L1425.6 157.3 L1424.0 154.8 L1422.6 152.0 L1421.5 149.3 L1420.6 146.5 L1420.1 143.8Z" fill="url(#iB2)" stroke="#111" stroke-width="1.1" stroke-linejoin="round" />
<path d="M1406.9 156.5 L1406.9 117.3 L1407.1 115.6 L1407.6 114.1 L1408.4 113.1 L1409.5 112.4 L1412.4 110.8 L1413.7 110.6 L1415.2 110.9 L1416.8 111.6 L1450.7 131.2 L1452.3 132.3 L1453.8 133.7 L1455.1 135.5 L1456.3 137.4 L1457.1 139.5 L1457.6 141.5 L1457.8 143.4 L1457.8 182.6 L1457.6 184.3 L1457.1 185.7 L1456.3 186.8 L1455.1 187.5 L1452.3 189.1 L1451.0 189.3 L1449.5 189.0 L1447.9 188.3 L1414.0 168.7 L1412.4 167.6 L1410.9 166.1 L1409.5 164.4 L1408.4 162.5 L1407.6 160.4 L1407.1 158.4Z" fill="#b9b3a5" stroke="#111" stroke-width="1.2" stroke-linejoin="round" />
<path d="M1447.9 132.8 L1450.7 131.2 L1457.8 143.4 L1455.0 145.0Z" fill="#c4bfb1" stroke="none" stroke-width="1.1" stroke-linejoin="round" />
<path d="M1414.0 113.2 L1416.8 111.6 L1450.7 131.2 L1447.9 132.8Z" fill="#c2bbad" stroke="none" stroke-width="1.1" stroke-linejoin="round" />
<path d="M1455.0 145.0 L1457.8 143.4 L1457.8 182.6 L1455.0 184.2Z" fill="#9e988b" stroke="none" stroke-width="1.1" stroke-linejoin="round" />
<path d="M1455.0 145.0 L1454.8 143.1 L1454.3 141.1 L1453.4 139.1 L1452.3 137.1 L1451.0 135.4 L1449.5 133.9 L1447.9 132.8 L1414.0 113.2 L1412.4 112.5 L1410.9 112.2 L1409.5 112.4 L1408.4 113.1 L1407.6 114.1 L1407.1 115.6 L1406.9 117.3 L1406.9 156.5 L1407.1 158.4 L1407.6 160.4 L1408.4 162.5 L1409.5 164.4 L1410.9 166.1 L1412.4 167.6 L1414.0 168.7 L1447.9 188.3 L1449.5 189.0 L1451.0 189.3 L1452.3 189.1 L1453.4 188.4 L1454.3 187.4 L1454.8 186.0 L1455.0 184.2Z" fill="#b3afa3" stroke="#111" stroke-width="1.1" stroke-linejoin="round" />
<path d="M1382.5 170.6 L1382.5 131.4 L1382.7 129.7 L1383.2 128.2 L1384.0 127.2 L1385.1 126.5 L1409.5 112.4 L1410.9 112.2 L1412.4 112.5 L1414.0 113.2 L1447.9 132.8 L1449.5 133.9 L1451.0 135.4 L1452.3 137.1 L1453.4 139.1 L1454.3 141.1 L1454.8 143.1 L1455.0 145.0 L1455.0 184.2 L1454.8 186.0 L1454.3 187.4 L1453.4 188.4 L1452.3 189.1 L1427.9 203.2 L1426.6 203.4 L1425.1 203.1 L1423.5 202.4 L1389.6 182.8 L1388.0 181.7 L1386.5 180.2 L1385.1 178.5 L1384.0 176.5 L1383.2 174.5 L1382.7 172.5Z" fill="#c9c5ba" stroke="#111" stroke-width="1.2" stroke-linejoin="round" />
<path d="M1423.5 146.9 L1447.9 132.8 L1455.0 145.0 L1430.6 159.1Z" fill="url(#iFilF)" stroke="none" stroke-width="1.1" stroke-linejoin="round" />
<path d="M1389.6 127.3 L1414.0 113.2 L1447.9 132.8 L1423.5 146.9Z" fill="url(#iTopF)" stroke="none" stroke-width="1.1" stroke-linejoin="round" />
<path d="M1430.6 159.1 L1455.0 145.0 L1455.0 184.2 L1430.6 198.3Z" fill="url(#iSideF)" stroke="none" stroke-width="1.1" stroke-linejoin="round" />
<path d="M1423.5 146.9 L1447.9 132.8" fill="none" stroke="#1a1a1a" stroke-width="0.9" stroke-linejoin="round" />
<path d="M1430.6 159.1 L1455.0 145.0" fill="none" stroke="#1a1a1a" stroke-width="0.9" stroke-linejoin="round" />
<path d="M1389.6 127.3 L1414.0 113.2" fill="none" stroke="#1a1a1a" stroke-width="0.9" stroke-linejoin="round" />
<path d="M1430.6 198.3 L1455.0 184.2" fill="none" stroke="#1a1a1a" stroke-width="0.7" stroke-linejoin="round" />
<path d="M1430.6 159.1 L1430.4 157.2 L1429.9 155.2 L1429.0 153.1 L1427.9 151.2 L1426.6 149.5 L1425.1 148.0 L1423.5 146.9 L1389.6 127.3 L1388.0 126.6 L1386.5 126.3 L1385.1 126.5 L1384.0 127.2 L1383.2 128.2 L1382.7 129.7 L1382.5 131.4 L1382.5 170.6 L1382.7 172.5 L1383.2 174.5 L1384.0 176.5 L1385.1 178.5 L1386.5 180.2 L1388.0 181.7 L1389.6 182.8 L1423.5 202.4 L1425.1 203.1 L1426.6 203.4 L1427.9 203.2 L1429.0 202.5 L1429.9 201.5 L1430.4 200.0 L1430.6 198.3Z" fill="#b3b0a6" stroke="#111" stroke-width="1.1" stroke-linejoin="round" />
<ellipse cx="1414.1" cy="124.9" rx="6.6" ry="3.7" fill="#4e4c45" stroke="#111" stroke-width="1.2"/>
<ellipse cx="1414.9" cy="126.0" rx="4.2" ry="1.9" fill="#6f6c63"/>
<path d="M1392.1 178.2 L1239.0 266.6 L1238.7 266.8 L1238.3 266.8 L1237.8 266.8 L1237.4 266.6 L1236.9 266.4 L1236.4 266.1 L1236.0 265.7 L1235.5 265.2 L1235.1 264.7 L1234.8 264.2 L1234.5 263.6 L1234.2 263.0 L1234.0 262.4 L1233.9 261.8 L1233.9 261.2 L1233.9 260.7 L1234.0 260.2 L1234.2 259.8 L1234.5 259.5 L1234.8 259.3 L1387.9 170.9 L1388.2 170.7 L1388.6 170.7 L1389.1 170.7 L1389.5 170.9 L1390.0 171.1 L1390.5 171.4 L1390.9 171.8 L1391.3 172.3 L1391.7 172.8 L1392.1 173.3 L1392.4 173.9 L1392.7 174.5 L1392.8 175.1 L1393.0 175.7 L1393.0 176.3 L1393.0 176.8 L1392.8 177.3 L1392.7 177.7 L1392.4 178.0Z" fill="#77736a" stroke="#111" stroke-width="0.8" stroke-linejoin="round" />
<path d="M1392.4 140.3 L1239.3 228.6 L1238.9 228.8 L1238.5 228.9 L1238.0 228.8 L1237.4 228.7 L1236.9 228.4 L1236.4 228.0 L1235.8 227.6 L1235.3 227.1 L1234.9 226.5 L1234.4 225.8 L1234.1 225.1 L1233.8 224.4 L1233.6 223.7 L1233.5 223.1 L1233.4 222.4 L1233.5 221.8 L1233.6 221.3 L1233.8 220.8 L1234.1 220.4 L1234.4 220.2 L1387.5 131.8 L1387.9 131.6 L1388.4 131.6 L1388.9 131.6 L1389.4 131.8 L1390.0 132.0 L1390.5 132.4 L1391.1 132.8 L1391.6 133.4 L1392.0 134.0 L1392.4 134.6 L1392.8 135.3 L1393.1 136.0 L1393.3 136.7 L1393.4 137.4 L1393.4 138.0 L1393.4 138.6 L1393.3 139.2 L1393.1 139.6 L1392.8 140.0Z" fill="url(#iT0)" stroke="#111" stroke-width="1.1" stroke-linejoin="round" />
<path d="M1420.5 189.1 L1267.4 277.5 L1265.1 278.4 L1262.4 278.8 L1259.6 278.5 L1256.5 277.6 L1253.4 276.1 L1250.3 274.0 L1247.3 271.4 L1244.5 268.4 L1241.8 265.0 L1239.4 261.3 L1237.4 257.4 L1235.8 253.4 L1234.6 249.4 L1233.9 245.5 L1233.6 241.8 L1233.9 238.4 L1234.6 235.3 L1235.8 232.7 L1237.4 230.5 L1239.4 229.0 L1392.5 140.6 L1394.9 139.6 L1397.5 139.3 L1400.4 139.6 L1403.4 140.5 L1406.5 142.0 L1409.6 144.1 L1412.6 146.6 L1415.5 149.7 L1418.2 153.1 L1420.5 156.8 L1422.5 160.7 L1424.2 164.7 L1425.4 168.7 L1426.1 172.6 L1426.3 176.3 L1426.1 179.7 L1425.4 182.8 L1424.2 185.4 L1422.5 187.5Z" fill="url(#iTube)" stroke="#55567e" stroke-width="0.9" stroke-linejoin="round" />
<path d="M1423.5 176.7 L1423.3 173.2 L1422.6 169.5 L1421.5 165.7 L1419.9 161.9 L1418.0 158.2 L1415.8 154.7 L1413.3 151.5 L1410.6 148.6 L1407.7 146.2 L1404.8 144.2 L1401.8 142.8 L1399.0 141.9 L1396.3 141.7 L1393.7 142.0 L1391.5 142.9 L1389.6 144.4 L1388.1 146.4 L1386.9 148.9 L1386.3 151.8 L1386.0 155.0 L1386.3 158.6 L1386.9 162.3 L1388.1 166.1 L1389.6 169.8 L1391.5 173.5 L1393.7 177.0 L1396.3 180.2 L1399.0 183.1 L1401.8 185.5 L1404.8 187.5 L1407.7 188.9 L1410.6 189.8 L1413.3 190.1 L1415.8 189.7 L1418.0 188.8 L1419.9 187.3 L1421.5 185.3 L1422.6 182.8 L1423.3 179.9Z" fill="#8b8cd8" stroke="#7374b4" stroke-width="0.8" stroke-linejoin="round" opacity="0.5"/>
<path d="M1381.3 190.3 L1383.2 192.3 L1385.3 194.1 L1387.3 195.7 L1389.4 197.0 L1391.5 198.1 L1393.6 198.8 L1395.6 199.3 L1397.6 199.5 L1399.4 199.4 L1401.1 198.9 L1402.7 198.2 L1404.1 197.2 L1405.3 196.0 L1406.4 194.4 L1407.2 192.7 L1407.8 190.7 L1408.1 188.5 L1408.3 186.2 L1408.2 183.7 L1407.9 181.1 L1407.3 178.4 L1406.6 175.7 L1405.6 173.0 L1404.4 170.3 L1403.1 167.7 L1401.5 165.1 L1399.9 162.7 L1398.0 160.4 L1396.1 158.3" fill="none" stroke="#9a9bd0" stroke-width="0.8" stroke-linejoin="round" opacity="0.8"/>
<path d="M1409.3 173.7 L1280.6 248.0 L1279.8 248.3 L1279.0 248.4 L1278.0 248.3 L1277.1 248.0 L1276.1 247.5 L1275.1 246.8 L1274.1 246.0 L1273.2 245.0 L1272.3 243.9 L1271.6 242.8 L1270.9 241.5 L1270.4 240.2 L1270.0 238.9 L1269.8 237.7 L1269.7 236.5 L1269.8 235.4 L1270.0 234.4 L1270.4 233.5 L1270.9 232.9 L1271.6 232.4 L1400.3 158.1 L1401.0 157.8 L1401.9 157.7 L1402.8 157.7 L1403.8 158.0 L1404.8 158.5 L1405.8 159.2 L1406.7 160.0 L1407.6 161.0 L1408.5 162.1 L1409.3 163.3 L1409.9 164.5 L1410.4 165.8 L1410.8 167.1 L1411.0 168.3 L1411.1 169.5 L1411.0 170.6 L1410.8 171.6 L1410.4 172.5 L1409.9 173.2Z" fill="#6e6fc6" stroke="none" stroke-width="1.1" stroke-linejoin="round" opacity="0.45"/>
<path d="M1405.5 176.1 L1405.4 174.3 L1405.0 172.5 L1404.5 170.7 L1403.7 168.8 L1402.8 167.0 L1401.7 165.3 L1400.4 163.7 L1399.1 162.3 L1397.7 161.1 L1396.3 160.2 L1394.8 159.5 L1393.4 159.0 L1392.1 158.9 L1390.9 159.1 L1389.8 159.5 L1388.8 160.2 L1388.1 161.2 L1387.5 162.4 L1387.2 163.9 L1387.1 165.5 L1387.2 167.2 L1387.5 169.0 L1388.1 170.9 L1388.8 172.7 L1389.8 174.5 L1390.9 176.2 L1392.1 177.8 L1393.4 179.2 L1394.8 180.4 L1396.3 181.4 L1397.7 182.1 L1399.1 182.5 L1400.4 182.6 L1401.7 182.5 L1402.8 182.0 L1403.7 181.3 L1404.5 180.3 L1405.0 179.1 L1405.4 177.7Z" fill="#6c6dc4" stroke="none" stroke-width="1.1" stroke-linejoin="round" opacity="0.5"/>
<path d="M1288.8 262.2 L1270.4 272.9 L1268.3 273.7 L1265.9 274.0 L1263.3 273.8 L1260.5 273.0 L1257.7 271.6 L1254.9 269.7 L1252.1 267.4 L1249.5 264.6 L1247.1 261.5 L1244.9 258.1 L1243.1 254.6 L1241.6 250.9 L1240.5 247.3 L1239.9 243.7 L1239.7 240.4 L1239.9 237.2 L1240.5 234.4 L1241.6 232.0 L1243.1 230.1 L1244.9 228.7 L1263.3 218.1 L1265.5 217.2 L1267.9 216.9 L1270.5 217.1 L1273.2 218.0 L1276.1 219.3 L1278.9 221.2 L1281.6 223.6 L1284.3 226.3 L1286.7 229.4 L1288.8 232.8 L1290.7 236.3 L1292.1 240.0 L1293.2 243.6 L1293.9 247.2 L1294.1 250.6 L1293.9 253.7 L1293.2 256.5 L1292.1 258.9 L1290.7 260.8Z" fill="url(#iPist)" stroke="none" stroke-width="1.1" stroke-linejoin="round" opacity="0.93"/>
<path d="M1298.0 254.4 L1422.4 182.6 L1420.3 187.9 L1295.9 259.8Z" fill="#ffffff" stroke="none" stroke-width="1.1" stroke-linejoin="round" opacity="0.0"/>
<path d="M1267.5 277.8 L1420.6 189.4 L1421.0 189.3 L1421.5 189.2 L1422.0 189.2 L1422.5 189.4 L1423.1 189.7 L1423.6 190.0 L1424.1 190.5 L1424.6 191.0 L1425.1 191.6 L1425.5 192.3 L1425.9 192.9 L1426.2 193.6 L1426.4 194.3 L1426.5 195.0 L1426.5 195.7 L1426.5 196.3 L1426.4 196.8 L1426.2 197.3 L1425.9 197.6 L1425.5 197.9 L1272.4 286.3 L1272.0 286.5 L1271.6 286.5 L1271.1 286.5 L1270.5 286.3 L1270.0 286.0 L1269.4 285.7 L1268.9 285.2 L1268.4 284.7 L1268.0 284.1 L1267.5 283.5 L1267.2 282.8 L1266.9 282.1 L1266.7 281.4 L1266.6 280.7 L1266.5 280.0 L1266.6 279.4 L1266.7 278.9 L1266.9 278.4 L1267.2 278.1Z" fill="url(#iT1)" stroke="#111" stroke-width="1.1" stroke-linejoin="round" />
<path d="M1267.5 239.3 L1420.6 150.9 L1421.0 150.7 L1421.5 150.7 L1422.0 150.7 L1422.5 150.9 L1423.1 151.1 L1423.6 151.5 L1424.1 151.9 L1424.6 152.5 L1425.1 153.1 L1425.5 153.7 L1425.9 154.4 L1426.2 155.1 L1426.4 155.8 L1426.5 156.5 L1426.5 157.1 L1426.5 157.7 L1426.4 158.3 L1426.2 158.7 L1425.9 159.1 L1425.5 159.4 L1272.4 247.7 L1272.0 247.9 L1271.6 248.0 L1271.1 247.9 L1270.5 247.8 L1270.0 247.5 L1269.4 247.1 L1268.9 246.7 L1268.4 246.2 L1268.0 245.6 L1267.5 244.9 L1267.2 244.2 L1266.9 243.5 L1266.7 242.8 L1266.6 242.2 L1266.5 241.5 L1266.6 240.9 L1266.7 240.4 L1266.9 239.9 L1267.2 239.5Z" fill="url(#iT2)" stroke="#111" stroke-width="1.1" stroke-linejoin="round" />
<path d="M1205.4 272.8 L1205.4 233.6 L1205.5 231.9 L1206.1 230.5 L1206.9 229.4 L1208.0 228.8 L1232.1 214.9 L1233.4 214.7 L1234.9 215.0 L1236.5 215.7 L1270.4 235.3 L1272.0 236.4 L1273.5 237.8 L1274.8 239.6 L1275.9 241.5 L1276.8 243.6 L1277.3 245.6 L1277.5 247.5 L1277.5 286.7 L1277.3 288.4 L1276.8 289.8 L1275.9 290.9 L1274.8 291.5 L1250.8 305.4 L1249.4 305.6 L1247.9 305.4 L1246.4 304.7 L1212.4 285.1 L1210.9 284.0 L1209.4 282.5 L1208.0 280.7 L1206.9 278.8 L1206.1 276.8 L1205.5 274.7Z" fill="#cdcac0" stroke="#111" stroke-width="1.2" stroke-linejoin="round" />
<path d="M1246.4 249.1 L1270.4 235.3 L1277.5 247.5 L1253.4 261.4Z" fill="url(#iFilB)" stroke="none" stroke-width="1.1" stroke-linejoin="round" />
<path d="M1212.4 229.5 L1236.5 215.7 L1270.4 235.3 L1246.4 249.1Z" fill="url(#iTopB)" stroke="none" stroke-width="1.1" stroke-linejoin="round" />
<path d="M1253.4 261.4 L1277.5 247.5 L1277.5 286.7 L1253.4 300.6Z" fill="url(#iSideB)" stroke="none" stroke-width="1.1" stroke-linejoin="round" />
<path d="M1246.4 249.1 L1270.4 235.3" fill="none" stroke="#1a1a1a" stroke-width="0.9" stroke-linejoin="round" />
<path d="M1253.4 261.4 L1277.5 247.5" fill="none" stroke="#1a1a1a" stroke-width="0.9" stroke-linejoin="round" />
<path d="M1212.4 229.5 L1236.5 215.7" fill="none" stroke="#1a1a1a" stroke-width="0.9" stroke-linejoin="round" />
<path d="M1253.4 300.6 L1277.5 286.7" fill="none" stroke="#1a1a1a" stroke-width="0.7" stroke-linejoin="round" />
<path d="M1253.4 261.4 L1253.3 259.5 L1252.7 257.4 L1251.9 255.4 L1250.8 253.5 L1249.4 251.7 L1247.9 250.2 L1246.4 249.1 L1212.4 229.5 L1210.9 228.8 L1209.4 228.6 L1208.0 228.8 L1206.9 229.4 L1206.1 230.5 L1205.5 231.9 L1205.4 233.6 L1205.4 272.8 L1205.5 274.7 L1206.1 276.8 L1206.9 278.8 L1208.0 280.7 L1209.4 282.5 L1210.9 284.0 L1212.4 285.1 L1246.4 304.7 L1247.9 305.4 L1249.4 305.6 L1250.8 305.4 L1251.9 304.8 L1252.7 303.7 L1253.3 302.3 L1253.4 300.6Z" fill="url(#iEnd)" stroke="#111" stroke-width="1.1" stroke-linejoin="round" />
<ellipse cx="1245.2" cy="236.8" rx="6.6" ry="3.7" fill="#4d4b45" stroke="#111" stroke-width="1.2"/>
<ellipse cx="1246.0" cy="237.8" rx="4.4" ry="2" fill="#7d7a71"/>
<ellipse cx="1213.9" cy="237.8" rx="6.2" ry="6.6" fill="#1a1a18" opacity="0.85"/>
<path d="M1202.6 240.1 L1211.1 235.2 L1211.4 235.1 L1211.7 235.1 L1212.1 235.1 L1212.5 235.2 L1212.9 235.4 L1213.2 235.7 L1213.6 236.0 L1214.0 236.4 L1214.3 236.8 L1214.6 237.3 L1214.9 237.8 L1215.1 238.3 L1215.2 238.8 L1215.3 239.2 L1215.3 239.7 L1215.3 240.1 L1215.2 240.5 L1215.1 240.8 L1214.9 241.1 L1214.6 241.3 L1206.1 246.2 L1205.8 246.3 L1205.5 246.4 L1205.1 246.3 L1204.8 246.2 L1204.4 246.0 L1204.0 245.8 L1203.6 245.5 L1203.2 245.1 L1202.9 244.6 L1202.6 244.2 L1202.4 243.7 L1202.2 243.2 L1202.0 242.7 L1201.9 242.2 L1201.9 241.7 L1201.9 241.3 L1202.0 240.9 L1202.2 240.6 L1202.4 240.3Z" fill="url(#iBN0)" stroke="#111" stroke-width="1.1" stroke-linejoin="round" />
<path d="M1206.8 244.6 L1206.8 244.1 L1206.7 243.7 L1206.6 243.2 L1206.4 242.7 L1206.1 242.2 L1205.8 241.7 L1205.5 241.3 L1205.1 240.9 L1204.8 240.6 L1204.4 240.3 L1204.0 240.1 L1203.6 240.0 L1203.2 240.0 L1202.9 240.0 L1202.6 240.1 L1202.4 240.3 L1202.2 240.6 L1202.0 240.9 L1201.9 241.3 L1201.9 241.7 L1201.9 242.2 L1202.0 242.7 L1202.2 243.2 L1202.4 243.7 L1202.6 244.2 L1202.9 244.6 L1203.2 245.1 L1203.6 245.5 L1204.0 245.8 L1204.4 246.0 L1204.8 246.2 L1205.1 246.3 L1205.5 246.4 L1205.8 246.3 L1206.1 246.2 L1206.4 246.0 L1206.6 245.7 L1206.7 245.4 L1206.8 245.0Z" fill="#8d897d" stroke="#111" stroke-width="0.9900000000000001" stroke-linejoin="round" />
<ellipse cx="1213.9" cy="276.3" rx="6.2" ry="6.6" fill="#1a1a18" opacity="0.85"/>
<path d="M1202.6 278.7 L1211.1 273.8 L1211.4 273.7 L1211.7 273.6 L1212.1 273.7 L1212.5 273.8 L1212.9 274.0 L1213.2 274.2 L1213.6 274.5 L1214.0 274.9 L1214.3 275.3 L1214.6 275.8 L1214.9 276.3 L1215.1 276.8 L1215.2 277.3 L1215.3 277.8 L1215.3 278.2 L1215.3 278.7 L1215.2 279.1 L1215.1 279.4 L1214.9 279.7 L1214.6 279.8 L1206.1 284.7 L1205.8 284.9 L1205.5 284.9 L1205.1 284.9 L1204.8 284.8 L1204.4 284.6 L1204.0 284.3 L1203.6 284.0 L1203.2 283.6 L1202.9 283.2 L1202.6 282.7 L1202.4 282.2 L1202.2 281.7 L1202.0 281.2 L1201.9 280.8 L1201.9 280.3 L1201.9 279.9 L1202.0 279.5 L1202.2 279.1 L1202.4 278.9Z" fill="url(#iBN1)" stroke="#111" stroke-width="1.1" stroke-linejoin="round" />
<path d="M1206.8 283.1 L1206.8 282.7 L1206.7 282.2 L1206.6 281.7 L1206.4 281.2 L1206.1 280.7 L1205.8 280.2 L1205.5 279.8 L1205.1 279.4 L1204.8 279.1 L1204.4 278.9 L1204.0 278.7 L1203.6 278.6 L1203.2 278.5 L1202.9 278.6 L1202.6 278.7 L1202.4 278.9 L1202.2 279.1 L1202.0 279.5 L1201.9 279.9 L1201.9 280.3 L1201.9 280.8 L1202.0 281.2 L1202.2 281.7 L1202.4 282.2 L1202.6 282.7 L1202.9 283.2 L1203.2 283.6 L1203.6 284.0 L1204.0 284.3 L1204.4 284.6 L1204.8 284.8 L1205.1 284.9 L1205.5 284.9 L1205.8 284.9 L1206.1 284.7 L1206.4 284.6 L1206.6 284.3 L1206.7 284.0 L1206.8 283.6Z" fill="#8d897d" stroke="#111" stroke-width="0.9900000000000001" stroke-linejoin="round" />
<ellipse cx="1246.9" cy="256.9" rx="6.2" ry="6.6" fill="#1a1a18" opacity="0.85"/>
<path d="M1247.7 260.4 L1239.2 265.3 L1238.9 265.4 L1238.6 265.5 L1238.2 265.4 L1237.8 265.3 L1237.5 265.1 L1237.1 264.9 L1236.7 264.6 L1236.3 264.2 L1236.0 263.8 L1235.7 263.3 L1235.5 262.8 L1235.3 262.3 L1235.1 261.8 L1235.0 261.3 L1235.0 260.9 L1235.0 260.4 L1235.1 260.0 L1235.3 259.7 L1235.5 259.4 L1235.7 259.2 L1244.2 254.4 L1244.5 254.2 L1244.8 254.2 L1245.2 254.2 L1245.6 254.3 L1245.9 254.5 L1246.3 254.8 L1246.7 255.1 L1247.1 255.5 L1247.4 255.9 L1247.7 256.4 L1247.9 256.9 L1248.2 257.4 L1248.3 257.9 L1248.4 258.3 L1248.4 258.8 L1248.4 259.2 L1248.3 259.6 L1248.2 260.0 L1247.9 260.2Z" fill="url(#iBN2)" stroke="#111" stroke-width="1.1" stroke-linejoin="round" />
<path d="M1239.9 263.7 L1239.9 263.2 L1239.8 262.8 L1239.7 262.3 L1239.5 261.8 L1239.2 261.3 L1238.9 260.8 L1238.6 260.4 L1238.2 260.0 L1237.8 259.7 L1237.5 259.4 L1237.1 259.2 L1236.7 259.1 L1236.3 259.1 L1236.0 259.1 L1235.7 259.2 L1235.5 259.4 L1235.3 259.7 L1235.1 260.0 L1235.0 260.4 L1235.0 260.9 L1235.0 261.3 L1235.1 261.8 L1235.3 262.3 L1235.5 262.8 L1235.7 263.3 L1236.0 263.8 L1236.3 264.2 L1236.7 264.6 L1237.1 264.9 L1237.5 265.1 L1237.8 265.3 L1238.2 265.4 L1238.6 265.5 L1238.9 265.4 L1239.2 265.3 L1239.5 265.1 L1239.7 264.9 L1239.8 264.5 L1239.9 264.1Z" fill="#8d897d" stroke="#111" stroke-width="0.9900000000000001" stroke-linejoin="round" />
<ellipse cx="1246.9" cy="295.4" rx="6.2" ry="6.6" fill="#1a1a18" opacity="0.85"/>
<path d="M1235.7 297.8 L1244.2 292.9 L1244.5 292.8 L1244.8 292.7 L1245.2 292.8 L1245.6 292.9 L1245.9 293.1 L1246.3 293.3 L1246.7 293.6 L1247.1 294.0 L1247.4 294.4 L1247.7 294.9 L1247.9 295.4 L1248.2 295.9 L1248.3 296.4 L1248.4 296.9 L1248.4 297.3 L1248.4 297.8 L1248.3 298.2 L1248.2 298.5 L1247.9 298.8 L1247.7 299.0 L1239.2 303.9 L1238.9 304.0 L1238.6 304.0 L1238.2 304.0 L1237.8 303.9 L1237.5 303.7 L1237.1 303.4 L1236.7 303.1 L1236.3 302.7 L1236.0 302.3 L1235.7 301.8 L1235.5 301.3 L1235.3 300.8 L1235.1 300.3 L1235.0 299.9 L1235.0 299.4 L1235.0 299.0 L1235.1 298.6 L1235.3 298.2 L1235.5 298.0Z" fill="url(#iBN3)" stroke="#111" stroke-width="1.1" stroke-linejoin="round" />
<path d="M1239.9 302.2 L1239.9 301.8 L1239.8 301.3 L1239.7 300.8 L1239.5 300.3 L1239.2 299.8 L1238.9 299.3 L1238.6 298.9 L1238.2 298.5 L1237.8 298.2 L1237.5 298.0 L1237.1 297.8 L1236.7 297.7 L1236.3 297.6 L1236.0 297.7 L1235.7 297.8 L1235.5 298.0 L1235.3 298.2 L1235.1 298.6 L1235.0 299.0 L1235.0 299.4 L1235.0 299.9 L1235.1 300.3 L1235.3 300.8 L1235.5 301.3 L1235.7 301.8 L1236.0 302.3 L1236.3 302.7 L1236.7 303.1 L1237.1 303.4 L1237.5 303.7 L1237.8 303.9 L1238.2 304.0 L1238.6 304.0 L1238.9 304.0 L1239.2 303.9 L1239.5 303.7 L1239.7 303.4 L1239.8 303.1 L1239.9 302.7Z" fill="#8d897d" stroke="#111" stroke-width="0.9900000000000001" stroke-linejoin="round" />
<text transform="matrix(0.707 0.408 -0.000 0.817 1229.4 267.1)" x="3.5" y="-1.5" font-size="13" font-weight="bold" text-anchor="middle" fill="#0d0d0d" stroke="#0d0d0d" stroke-width="0.7" textLength="39" lengthAdjust="spacingAndGlyphs">FASTO</text>
</g><!-- ISOEND -->
<!-- nav bar -->
<rect x="881" y="883" width="75" height="27" fill="#c9c9c9"/><rect x="964" y="883" width="74" height="27" fill="#c9c9c9"/>
<g fill="none" stroke="#333" stroke-width="1">
<path d="M886.500 899L888.500 903.500L891 906.500H897L899.500 901.500L900 895.500Q899.300 894 898.300 895.500V897.500 M898.300 896V892.500Q897.300 891 896.300 892.500V896.500 M896.300 893V891Q895.300 889.500 894.300 891V896.500 M894.300 892V892Q893.300 890.500 892.300 892V899 M892.300 899L889.500 896.500Q887.500 896 886.500 899" fill="#fff"/>
<circle cx="916.500" cy="894.500" r="6" fill="#e4f0f0" stroke="#444" stroke-width="1.200"/><path d="M921 899L926 904" stroke="#333" stroke-width="2.400" stroke-linecap="round"/><rect x="910.500" y="888.500" width="15" height="15.500" stroke="#666" stroke-width="0.800" stroke-dasharray="2 1.500"/>
<circle cx="941.500" cy="894.500" r="6" fill="#f0f0f0" stroke="#444" stroke-width="1.200"/><rect x="938.500" y="891.500" width="6" height="6" rx="1" fill="#fff" stroke="#555" stroke-width="0.900"/><path d="M946 899L950.500 903.500" stroke="#333" stroke-width="2.400" stroke-linecap="round"/>
<path d="M968.500 888V894 M983.500 888V894 M969 890.500H983" stroke="#333"/><circle cx="977.500" cy="899.500" r="4.200" stroke="#444" stroke-width="1.600" stroke-dasharray="1.650 1.650"/><circle cx="977.500" cy="899.500" r="2.800" fill="#e6e6e6" stroke="#444" stroke-width="1.200"/><circle cx="977.500" cy="899.500" r="1" fill="#c9c9c9" stroke="#555" stroke-width="0.600"/>
</g>
<path d="M987 893.500H993L990 897Z M1024.500 893.500H1030.500L1027.500 897Z" fill="#333"/>
<rect x="1006.500" y="889.500" width="13" height="12" fill="#f2f2f2" stroke="#888" stroke-width="1"/>
<path d="M1010.500 890V901 M1014.500 890V901 M1007 893.500H1019 M1007 897.500H1019" stroke="#555" stroke-width="1"/>
<path d="M1006.500 889.500V901.500H1015Z" fill="#4a90e8"/><path d="M1006.500 889.500L1015 901.500" stroke="#222" stroke-width="1.500"/>
</svg>
<div class="abs" style="left:818px;top:463px;width:352px;height:24.5px;background:#fff;border:1px solid #d4d4d4;font-family:'DejaVu Sans','Liberation Sans',sans-serif;font-size:12px;line-height:25px;color:#7a7a7a;white-space:nowrap;"><span style="padding-left:5.5px;letter-spacing:0.035px;">Place section view. Press Shift to toggle view alignment</span></div>

<!-- BROWSER PANEL -->
<div class="phead" style="left:5px;top:77px;width:298px;"><span class="abs" style="left:26px;top:0;">BROWSER</span>
<svg width="298" height="23" viewBox="0 0 298 23"><path d="M4.5 11.5L9 8.5V14.5Z M9.5 11.5L14 8.5V14.5Z" fill="#333"/><circle cx="282.5" cy="11.5" r="4.2" fill="#222"/><rect x="280" y="10.8" width="5" height="1.5" fill="#ddd"/><rect x="294" y="5" width="1" height="13" fill="#777"/><rect x="296" y="7" width="1" height="9" fill="#999"/></svg>
</div>
<div class="trow" style="left:41px;top:106px;width:87px;"><span class="abs" style="left:35px;top:0;">Sheet1</span></div>
<div class="trow" style="left:59px;top:132px;width:132px;"><span class="abs" style="left:35px;top:0;">Assembly3 v1:1</span></div>
<svg id="treeicons" width="200" height="160" viewBox="0 0 200 160">
<defs><linearGradient id="gtri" x1="0" y1="0" x2="1" y2="1"><stop offset="0.35" stop-color="#e0e0e0"/><stop offset="1" stop-color="#3a3a3a"/></linearGradient></defs>
<path d="M22.5 122.5H32.5V112.5Z" fill="url(#gtri)" stroke="#333" stroke-width="1"/>
<path d="M41.5 137V150L49.5 143.5Z" fill="#e6e6e6" stroke="#333" stroke-width="1.2"/>
<!-- sheet icon -->
<rect x="46.5" y="110.500" width="13" height="13" fill="#f2f2f2" stroke="#888" stroke-width="1"/>
<path d="M50.5 112V123 M54.5 112V123 M47 115.500H59 M47 119.500H59" stroke="#555" stroke-width="1"/>
<path d="M46.5 111.500V123.500H55Z" fill="#4a90e8"/><path d="M46.500 111.500L55 123.500" stroke="#222" stroke-width="1.5"/>
<!-- component icon -->
<path d="M63.500 139.500L66 136.500H72.500V143L75 141.500H78.500V148L76 150.500H63.500Z" fill="#f4f4f4" stroke="#444" stroke-width="1"/>
<path d="M63.500 139.500H70V150.500 M70 139.500L72.500 136.500 M70 144.500H76V150.500 M76 144.500L78.500 141.500" fill="none" stroke="#999" stroke-width="0.8"/>
</svg>

<!-- COMMENTS PANEL -->
<div class="phead" style="left:5px;top:886px;width:298px;"><span class="abs" style="left:26px;top:0;letter-spacing:-0.28px;">COMMENTS</span>
<svg width="298" height="23" viewBox="0 0 298 23"><circle cx="282.5" cy="11.5" r="4.2" fill="#222"/><rect x="280" y="10.8" width="5" height="1.5" fill="#ddd"/><rect x="281.750" y="9" width="1.5" height="5" fill="#ddd"/><rect x="294" y="5" width="1" height="13" fill="#777"/><rect x="296" y="7" width="1" height="9" fill="#999"/></svg>
</div>
<div class="dot" style="left:4px;top:885px;"></div><div class="dot" style="left:303px;top:885px;"></div>

<!-- DRAWING VIEW PANEL -->
<div id="dv" class="abs">
<div class="abs" style="left:0;top:0;width:284px;height:23px;background:#d3d3d3;border-bottom:1px solid #bdbdbd;"></div>
<div class="abs" style="left:0;top:395px;width:284px;height:41px;background:#d3d3d3;border-top:1px solid #bdbdbd;"></div>
<div class="abs" style="left:26px;top:0;height:23px;line-height:24px;font-size:12px;color:#6b6b6b;letter-spacing:-0.35px;">DRAWING VIEW</div>
<div class="tri" style="left:2.5px;top:36px;"></div><div class="sec" style="left:15px;top:32px;">Appearance</div>
<div class="lbl" style="top:62px;">Style</div>
<div class="lbl" style="top:92px;">Scale</div>
<div class="abs" style="left:133px;top:88px;width:123px;height:19px;border:1px solid #8c8c8c;background:#fff;font-size:12px;line-height:20px;color:#333;"><span style="padding-left:3px;">1:2 (From parent)</span></div>
<div class="abs" style="left:260px;top:97px;width:0;height:0;border-left:3.5px solid transparent;border-right:3.5px solid transparent;border-top:4px solid #222;"></div>
<div class="tri" style="left:2.5px;top:126px;"></div><div class="sec" style="left:15px;top:122px;letter-spacing:-0.45px;">Edge Visibility</div>
<div class="lbl" style="top:152px;">Tangent Edges</div>
<div class="lbl" style="top:182px;">Interference Edges</div><div class="cb" style="left:132px;top:181px;"></div>
<div class="lbl" style="top:212px;">Thread Edges</div><div class="cb" style="left:132px;top:211px;"></div>
<div class="tri" style="left:10px;top:246px;border-left-width:4.5px;border-right-width:4.5px;border-top-width:6px;"></div><div class="sec" style="left:24px;top:242px;letter-spacing:-0.2px;">Objects To Cut</div>
<div class="abs" style="left:9px;top:270px;width:261px;height:105px;background:#fff;"></div>
<div class="abs" style="left:264px;top:270px;width:6px;height:105px;background:#e4e4e4;"></div>
<div class="abs" style="left:264px;top:270px;width:5px;height:79px;background:#8a8a8a;border-radius:3px;"></div>
<div class="cb" style="left:12px;top:274.5px;background:linear-gradient(#fafafa,#dcdcdc);"></div><div class="lbl" style="left:104px;top:276px;">Body1</div><div class="lbl" style="left:190px;top:276px;">Back</div>
<div class="cb" style="left:12px;top:300.5px;background:linear-gradient(#fafafa,#dcdcdc);"></div><div class="lbl" style="left:104px;top:302px;">Body1</div><div class="lbl" style="left:190px;top:302px;">CY1</div>
<div class="cb" style="left:12px;top:326.5px;background:linear-gradient(#fafafa,#dcdcdc);"></div><div class="lbl" style="left:104px;top:328px;">Body1</div><div class="lbl" style="left:190px;top:328px;">Front_1</div>
<div class="cb" style="left:12px;top:352.5px;background:linear-gradient(#fafafa,#dcdcdc);"></div><div class="lbl" style="left:104px;top:354px;">Body1</div><div class="lbl" style="left:190px;top:354px;">Front_2</div>

<div class="btn" style="left:138px;top:407px;width:58px;color:#a9a9a9;">OK</div>
<div class="btn" style="left:208px;top:407px;width:58px;">Cancel</div>
<svg width="284" height="437" viewBox="0 0 284 437">
<rect x="1" y="5" width="1" height="13" fill="#999"/><rect x="3" y="7" width="1" height="9" fill="#777"/>
<circle cx="15.600" cy="11.5" r="4.2" fill="#222"/><rect x="13.100" y="10.8" width="5" height="1.5" fill="#ddd"/>
<path d="M270 8.500L274.500 11.500L270 14.500Z M275 8.500L279.500 11.500L275 14.500Z" fill="#333"/>
<rect x="217" y="55" width="23.500" height="27.300" fill="#5b8cb8"/>
<rect x="188.600" y="145.400" width="23" height="27" fill="#5b8cb8"/>
<g transform="translate(134,60)"><path d="M0.5 3.5L3.5 0.5H10.5V8.5L7.5 11.5H0.5Z" fill="#7aa7e0" stroke="#1f3f7f"/><path d="M0.5 3.5H7.5V11.500 M7.5 3.5L10.500 0.500" fill="none" stroke="#1f3f7f"/><path d="M7.5 9.500L9.500 7.500H15.500V13L13.500 15.500H7.500Z" fill="#a8c6ee" stroke="#1f3f7f"/><path d="M7.5 9.500H13.500V15.500 M13.500 9.500L15.500 7.500" fill="none" stroke="#1f3f7f"/></g><g transform="translate(163,61)"><path d="M0.5 4.5H11.5V14.5H0.5Z" fill="#f4f4f4" stroke="#333" stroke-width="1"/><path d="M0.5 4.5L4.5 0.5H15.5L11.5 4.5Z" fill="#f4f4f4" stroke="#333" stroke-width="1"/><path d="M11.5 4.5L15.5 0.5V10.5L11.5 14.5Z" fill="#e4e4e4" stroke="#333" stroke-width="1"/></g><g transform="translate(192,61)"><path d="M0.5 4.5H11.5V14.5H0.5Z" fill="#f0f0f0" stroke="#333" stroke-width="1"/><path d="M0.5 4.5L4.5 0.5H15.5L11.5 4.5Z" fill="#f0f0f0" stroke="#333" stroke-width="1"/><path d="M11.5 4.5L15.5 0.5V10.5L11.5 14.5Z" fill="#e0e0e0" stroke="#333" stroke-width="1"/><path d="M4.500 0.500V10.500H15.500 M4.500 10.500L0.500 14.500" fill="none" stroke="#555" stroke-width="0.8" stroke-dasharray="1 1"/></g><g transform="translate(221,61)"><path d="M0.5 4.5H11.5V14.5H0.5Z" fill="#a9c4e6" stroke="#1c2c4c" stroke-width="1"/><path d="M0.5 4.5L4.5 0.5H15.5L11.5 4.5Z" fill="#cfe0f4" stroke="#1c2c4c" stroke-width="1"/><path d="M11.5 4.5L15.5 0.5V10.5L11.5 14.5Z" fill="#8aabd6" stroke="#1c2c4c" stroke-width="1"/></g><g transform="translate(250,61)"><path d="M0.5 4.5H11.5V14.5H0.5Z" fill="#9cbce6" stroke="#1f3f8f" stroke-width="1"/><path d="M0.5 4.5L4.5 0.5H15.5L11.5 4.5Z" fill="#c4d8f2" stroke="#1f3f8f" stroke-width="1"/><path d="M11.5 4.5L15.5 0.5V10.5L11.5 14.5Z" fill="#86a8d8" stroke="#1f3f8f" stroke-width="1"/><path d="M4.500 0.500V10.500H15.500 M4.500 10.500L0.500 14.500" fill="none" stroke="#1f3f8f" stroke-width="0.8" stroke-dasharray="1 1"/></g><g transform="translate(134,151)"><path d="M0.500 14.500V5.500Q1 0.500 8.500 0.500Q15.500 1 15.500 9.500L11.500 14.500Z" fill="#f6f6f6" stroke="#333"/><path d="M0.500 5.500Q7 4.500 11.500 14.500" fill="none" stroke="#333"/><path d="M11.500 14.500Q11 8 15.500 9.500 M2 3.500Q9 2 13 8" fill="none" stroke="#333" stroke-width="0.8"/></g><g transform="translate(163,151)"><path d="M0.500 14.500V5.500Q1 0.500 8.500 0.500Q15.500 1 15.500 9.500L11.500 14.500Z" fill="#f6f6f6" stroke="#333"/><path d="M0.500 5.500Q7 4.500 11.500 14.500" fill="none" stroke="#333"/><path d="M2 3.500Q9 2 13 8" fill="none" stroke="#555" stroke-width="0.8" stroke-dasharray="1.500 1"/></g><g transform="translate(192,151)"><path d="M0.500 14.500V5.500Q1 0.500 8.500 0.500Q15.500 1 15.500 9.500L11.500 14.500Z" fill="#f6f6f6" stroke="#222"/><path d="M0.500 5.500Q7 4.500 11.500 14.500" fill="none" stroke="#222"/></g>
<path d="M15.500 281.5L18.500 285.5L23.500 277.5" fill="none" stroke="#222" stroke-width="1.400"/><path d="M15.500 307.5L18.500 311.5L23.500 303.5" fill="none" stroke="#222" stroke-width="1.400"/><path d="M15.500 333.5L18.500 337.5L23.500 329.5" fill="none" stroke="#222" stroke-width="1.400"/><path d="M15.500 359.5L18.500 363.5L23.500 355.5" fill="none" stroke="#222" stroke-width="1.400"/><circle cx="21" cy="416" r="6.5" fill="#111"/><rect x="20" y="414.500" width="2.200" height="5.500" fill="#fff"/><circle cx="21.100" cy="412.300" r="1.300" fill="#fff"/>
</svg>
</div>
<div class="dot" style="left:1631px;top:76px;"></div><div class="dot" style="left:1915px;top:76px;"></div><div class="dot" style="left:1631px;top:513px;"></div><div class="dot" style="left:1915px;top:513px;"></div>

<!-- TOOLBAR -->
<div id="tbgrip" class="abs"></div>
<div id="tb" class="abs">
<div class="sep" style="left:196px;"></div><div class="sep" style="left:299px;"></div><div class="sep" style="left:497px;"></div><div class="sep" style="left:607px;"></div><div class="sep" style="left:709px;"></div><div class="sep" style="left:859px;"></div><div class="sep" style="left:961px;"></div>
<div class="tlabel" style="left:42px;">DRAWING VIEWS<i></i></div>
<div class="tlabel" style="left:219px;">MODIFY<i></i></div>
<div class="tlabel" style="left:357px;">GEOMETRY<i></i></div>
<div class="tlabel" style="left:510px;">DIMENSIONS<i></i></div>
<div class="tlabel" style="left:636px;">TEXT<i></i></div>
<div class="tlabel" style="left:749px;">SYMBOLS<i></i></div>
<div class="tlabel" style="left:881px;">TABLES<i></i></div>
<div class="tlabel" style="left:974px;">OUTPUT<i></i></div>
</div>
<svg id="tbicons" width="1100" height="80" viewBox="0 0 1100 80">
<defs>
<linearGradient id="gw" x1="0" y1="0" x2="0" y2="1"><stop offset="0" stop-color="#c9ccd6"/><stop offset="0.55" stop-color="#eceef2"/><stop offset="1" stop-color="#ffffff"/></linearGradient>
<linearGradient id="gg" x1="0" y1="0" x2="0" y2="1"><stop offset="0" stop-color="#8b8f9c"/><stop offset="1" stop-color="#d9dbe2"/></linearGradient>
<linearGradient id="gcube" x1="0" y1="0" x2="1" y2="1"><stop offset="0" stop-color="#e4e6ec"/><stop offset="1" stop-color="#a9adba"/></linearGradient>
<linearGradient id="garrow" x1="0" y1="0" x2="0" y2="1"><stop offset="0" stop-color="#5aa9f5"/><stop offset="1" stop-color="#1668d0"/></linearGradient>
<filter id="ish" x="-20%" y="-20%" width="140%" height="150%"><feDropShadow dx="0" dy="1" stdDeviation="0.7" flood-color="#000" flood-opacity="0.45"/></filter>
</defs>
<!-- grip -->
<rect x="10" y="26" width="1" height="23" fill="#8d8d8d"/><rect x="14" y="26" width="1" height="23" fill="#8d8d8d"/>
<!-- selected button -->
<rect x="121" y="9" width="44" height="43" fill="#5789b4"/>
<!-- 1 base view -->
<path d="M34 20.500H45.500V26H58.500V38.500H34Z" fill="url(#gw)" stroke="#333" stroke-width="1.2" stroke-linejoin="round" filter="url(#ish)"/>
<!-- 2 projected view -->
<g filter="url(#ish)"><rect x="82" y="15" width="11" height="9.500" fill="url(#gg)" stroke="#444" stroke-width="1"/><rect x="93" y="15" width="13" height="9.500" fill="url(#gg)" stroke="#444" stroke-width="1"/>
<path d="M82 31.500H93.500V34.500H106V43H82Z" fill="url(#gw)" stroke="#333" stroke-width="1.2" stroke-linejoin="round"/></g>
<path d="M82.500 26V31 M93 26V34 M106 26V34" stroke="#555" stroke-width="1" stroke-dasharray="2 1.500"/>
<!-- 3 section view -->
<g filter="url(#ish)"><path d="M128 20H138.500V25.500H152V36.500H128Z" fill="url(#gw)" stroke="#222" stroke-width="1.300" stroke-linejoin="round"/></g>
<path d="M133.500 21V31.500H146 M146 31.500V36" fill="none" stroke="#222" stroke-width="1.300"/>
<path d="M134 17.500H140.500 M146 36V40.500H150.500" fill="none" stroke="#222" stroke-width="1.300"/>
<path d="M139.500 14.500L143.500 17.500L139.500 20.500Z M149 37.500L153 40.500L149 43.500Z" fill="#222"/>
<text x="144.500" y="21" font-size="8" font-weight="bold" fill="#222">A</text><text x="153" y="44.500" font-size="8" font-weight="bold" fill="#222">A</text>
<!-- 4 detail view -->
<g filter="url(#ish)"><path d="M176 23.500H184V32H200V40H176Z" fill="url(#gw)" stroke="#333" stroke-width="1.200" stroke-linejoin="round"/>
<circle cx="189.500" cy="26" r="7.500" fill="#e9ebef" stroke="#333" stroke-width="1.200"/></g>
<path d="M188 21.500V27.500H194.500" fill="none" stroke="#333" stroke-width="1.200"/>
<text x="197.500" y="24" font-size="9.500" fill="#2a2a2a">A</text>
<!-- 5 move -->
<g fill="#3a3a3a"><path d="M244 14.500L250 21.500H246V25.500H242V21.500H238Z"/><path d="M244 45.500L250 38.500H246V34.500H242V38.500H238Z"/><path d="M229 30L236 24V28H240V32H236V36Z"/><path d="M259 30L252 24V28H248V32H252V36Z"/></g>
<rect x="241.500" y="27.500" width="5" height="5" fill="#dfe5f0" stroke="#1a6fe0" stroke-width="1"/>
<!-- 6 rotate -->
<path d="M300 20.500A13 13 0 1 1 287 18.800" fill="none" stroke="#444" stroke-width="1.500"/>
<path d="M289 15.500L296.500 19L289 23Z" fill="#1a6fe0"/>
<!-- 7 centerline -->
<path d="M333 31L346.500 17.500 M345 43.500L358.500 30" stroke="#555" stroke-width="1.300"/>
<path d="M332 44L359 16.500" stroke="#1a6fe0" stroke-width="1.300" stroke-dasharray="6 2 2 2"/>
<!-- 8 center marks -->
<g fill="none" stroke="#555" stroke-width="1.200"><circle cx="385.500" cy="21.500" r="4"/><circle cx="385.500" cy="38.500" r="4"/><circle cx="399.500" cy="30.500" r="7"/></g>
<path d="M380 21.500H391 M385.500 16V27 M380 38.500H391 M385.500 33V44 M390 30.500H409 M399.500 21V40" stroke="#1a6fe0" stroke-width="1.200"/>
<!-- 9 pattern -->
<g fill="none" stroke="#555" stroke-width="1.200"><circle cx="433" cy="21" r="4.300"/><circle cx="451" cy="21" r="4.300"/><circle cx="433" cy="39" r="4.300"/><circle cx="451" cy="39" r="4.300"/></g>
<circle cx="442" cy="30" r="13.200" fill="none" stroke="#1a6fe0" stroke-width="1.200"/>
<path d="M428.500 16.500L437.500 25.500 M437.500 16.500L428.500 25.500 M446.500 16.500L455.500 25.500 M455.500 16.500L446.500 25.500 M428.500 34.500L437.500 43.500 M437.500 34.500L428.500 43.500 M446.500 34.500L455.500 43.500 M455.500 34.500L446.500 43.500" stroke="#1a6fe0" stroke-width="1.200"/>
<!-- 10 edge extension -->
<path d="M479.500 16V33 M480 22H504.500 M490 30.500H504.500 M490 30.500L486.500 36.500L492.500 44" fill="none" stroke="#444" stroke-width="1.200"/>
<path d="M480 22L485.500 19.500V24.500Z" fill="#444"/>
<path d="M475 28.500L484.500 36.500 M476 30.500H486.500" stroke="#1a6fe0" stroke-width="1.200"/>
<!-- 11 dimension -->
<path d="M533.500 16V44 M562.500 16V44" stroke="#444" stroke-width="1.300"/>
<path d="M535 22.500H561" stroke="#1a6fe0" stroke-width="1.200"/><path d="M534.500 22.500L539 20V25Z M561.500 22.500L557 20V25Z" fill="#1a6fe0"/>
<g fill="#f5b400"><path d="M547.500 30.500L549 33.500L552 34L549.500 35.500L550 38L547.500 36.500L545 38L545.500 35.500L543.500 34L546.500 33.500Z"/><path d="M541.500 34L543 36.500L545.500 37L543.500 38.500L544 41L541.500 39.500L539.500 41L540 38.500L538 37L540.500 36.500Z"/><path d="M553.500 34L555 36.500L557.500 37L555.500 38.500L556 41L553.500 39.500L551.500 41L552 38.500L550 37L552.500 36.500Z"/></g>
<g fill="#ff7a1a" opacity="0.85"><circle cx="547.500" cy="35" r="1.200"/><circle cx="541.700" cy="38" r="1.100"/><circle cx="553.700" cy="38" r="1.100"/></g>
<!-- 12 ordinate -->
<path d="M591 26.500H608 M591 40H608 M592.500 24V44 M600.500 30V44 M592.500 27Q597 27.500 600.500 34.500Q603 29 607 24.500 M600.500 33.500H608" fill="none" stroke="#444" stroke-width="1.200"/>
<g font-size="9.500" font-weight="bold" fill="#1a6fe0"><text x="589.500" y="23">0</text><text x="603.500" y="23">X</text><text x="582.500" y="31.500">Y</text><text x="583" y="43.500">0</text></g>
<!-- 13 text -->
<text x="643.300" y="40.800" font-size="30" fill="#3a3a3a" stroke="#3a3a3a" stroke-width="0.500">A</text>
<!-- 14 leader text -->
<text x="702.500" y="31.500" font-size="20" fill="#2f3a4a" stroke="#2f3a4a" stroke-width="0.300">A</text>
<path d="M702.500 25.500H697L690 40" fill="none" stroke="#2f3a4a" stroke-width="1.200"/><path d="M688.500 43L688.700 37.500L692.500 39.500Z" fill="#2f3a4a"/>
<!-- 15 surface -->
<path d="M746 32.500L752 42.500L765 17" fill="none" stroke="#444" stroke-width="1.300"/>
<!-- 16 FCF -->
<g filter="url(#ish)"><rect x="790" y="19.500" width="27.500" height="17.500" rx="1" fill="url(#gw)" stroke="#333" stroke-width="1.200"/></g>
<path d="M805.500 19.500V37" stroke="#333" stroke-width="1.200"/>
<circle cx="797.500" cy="28.500" r="4" fill="none" stroke="#333" stroke-width="1.200"/><path d="M791.500 28.500H803.500 M797.500 22.500V34.500" stroke="#333" stroke-width="1"/>
<text x="808" y="33.500" font-size="13" font-weight="bold" fill="#333">1</text>
<!-- 17 datum -->
<g filter="url(#ish)"><rect x="842.500" y="16.500" width="18" height="17" fill="url(#gw)" stroke="#333" stroke-width="1.200"/></g>
<text x="851.500" y="31" font-size="14.500" fill="#333" text-anchor="middle">A</text>
<path d="M851.500 33.500V41" stroke="#333" stroke-width="1.200"/><path d="M846 45L851.500 40L857 45Z" fill="#222"/>
<!-- 18 table -->
<g filter="url(#ish)"><rect x="898" y="16" width="22.500" height="28" rx="1" fill="url(#gw)" stroke="#333" stroke-width="1.300"/></g>
<rect x="898.500" y="16.500" width="21.500" height="4" fill="#9498a8"/>
<path d="M898.500 21H920 M898.500 27H920 M898.500 33H920 M898.500 39H920 M905.500 21V44" stroke="#9a9ca6" stroke-width="1"/>
<path d="M891.500 22.500H896 M891.500 28.500H896 M891.500 34.500H896 M891.500 40.500H896" stroke="#444" stroke-width="1.200"/>
<!-- 19 balloon -->
<g filter="url(#ish)"><path d="M940 24L944 19H955V28L958 28.500H968V40L964.500 43.500H940Z" fill="url(#gcube)" stroke="#333" stroke-width="1.200" stroke-linejoin="round"/></g>
<path d="M940 24H951V43.500 M951 24L955 19 M951 33H964.500V43.500 M964.500 33L968 28.500 M940 33.500H951" fill="none" stroke="#7d8190" stroke-width="0.900"/>
<circle cx="963" cy="20.500" r="6.300" fill="#e6e6e6" stroke="#555" stroke-width="1.200"/>
<text x="963" y="25" font-size="11.500" fill="#444" text-anchor="middle" font-family="Liberation Serif,serif">1</text>
<path d="M958.500 25L951.500 31.500" stroke="#444" stroke-width="1.100"/><path d="M950 33L951.500 28.500L955 32Z" fill="#444"/>
<!-- 20 pdf -->
<g filter="url(#ish)"><path d="M1009.500 14.500H1027L1033.500 21V43.500H1009.500Z" fill="url(#gw)" stroke="#aaa" stroke-width="0.600"/>
<rect x="1009.500" y="32" width="24" height="11.500" fill="#c41616"/></g>
<path d="M1027 14.500L1033.500 21H1027Z" fill="#d8262a"/>
<text x="1021.500" y="42" font-size="11" fill="#fff" text-anchor="middle" textLength="21" lengthAdjust="spacingAndGlyphs">PDF</text>
<path d="M1022 25H1031V21L1040 28.500L1031 36V32H1022Z" fill="url(#garrow)" stroke="#1658b8" stroke-width="0.600"/>
<!-- red highlight -->
<rect x="109.700" y="2.400" width="57.800" height="52.200" fill="none" stroke="#f24545" stroke-width="2.600" filter="url(#rsh)"/>
</svg>

<!-- RED ARROWS -->
<svg id="arrows" width="1920" height="914" viewBox="0 0 1920 914">
<rect x="413.300" y="371.800" width="527.400" height="153" fill="none" stroke="#f24545" stroke-width="2.800" filter="url(#rsh)"/>
<g fill="#fb4444" filter="url(#rsh)">
<path d="M137.800 69L152.300 97.500H123Z"/>
<path d="M133 97L142.800 97L142.200 130L132.400 130Z"/>
<path d="M132.200 137L142 137L141.400 165.500Q141 170.500 136.500 170.500Q131.700 170.500 131.600 165.500Z"/>
<path d="M257 422.200H281.800V432.200H257Q252 432 252 427.200Q252 422.400 257 422.200Z"/>
<path d="M292 422.600H321.800V432.800H292Z"/>
<path d="M332 423H352V433.200H332Z"/>
<path d="M351 413.900L380.500 428.900L351 443.300Z"/>
</g>
</svg>

</div>
</body>
</html>
